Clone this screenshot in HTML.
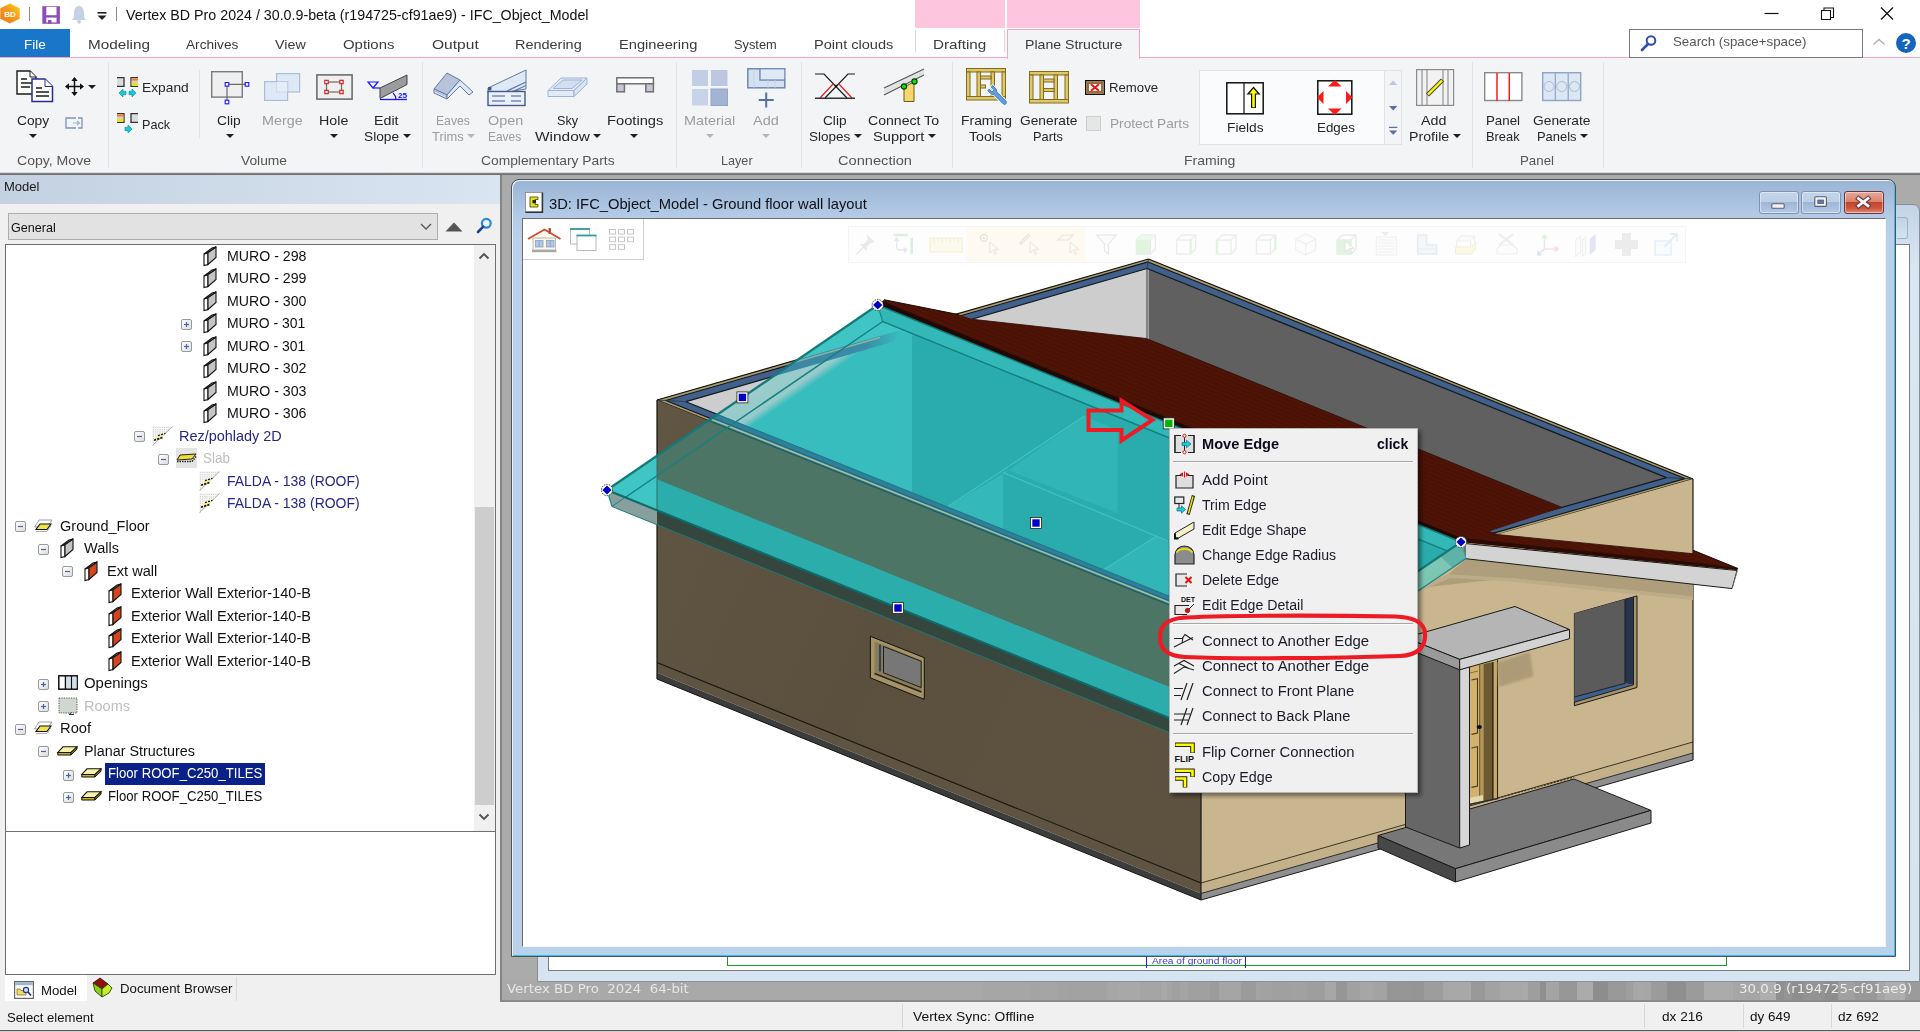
<!DOCTYPE html>
<html><head><meta charset="utf-8"><title>Vertex BD Pro 2024</title><style>
html,body{margin:0;padding:0;}
body{width:1920px;height:1032px;overflow:hidden;position:relative;background:#f0f0f0;font-family:"Liberation Sans",sans-serif;}
.b{position:absolute;}
.t{position:absolute;white-space:nowrap;line-height:1;transform-origin:0 50%;}
svg{overflow:visible;}
</style></head><body>
<!-- sec_top -->
<div class="b" style="left:0px;top:0px;width:1920px;height:58px;background:#fff;"></div>
<svg class="b" style="left:0px;top:3px;" width="22" height="22" viewBox="0 0 22 22"><defs><linearGradient id="hx" x1="1" y1="0" x2="0" y2="1"><stop offset="0" stop-color="#ffd21a"/><stop offset="0.45" stop-color="#f79a1e"/><stop offset="1" stop-color="#ee7410"/></linearGradient></defs><polygon points="10,0.5 19.7,5.2 19.7,15.8 10,20.6 0.3,15.8 0.3,5.2" fill="url(#hx)"/><text x="10" y="13.8" font-size="8" font-weight="bold" fill="#fff" text-anchor="middle" font-family="Liberation Sans, sans-serif">BD</text></svg>
<div class="b" style="left:29px;top:7px;width:1px;height:14px;background:#8a8a8a;"></div>
<svg class="b" style="left:42px;top:6px;" width="18" height="18" viewBox="0 0 18 18"><path d="M0.3,0.2h17.6v17.6h-17.6z" fill="#8e4fb5"/><rect x="4.3" y="0.9" width="10.2" height="8.3" fill="#fff"/><rect x="4.3" y="11.6" width="10.2" height="4.8" fill="#fff"/><rect x="6" y="14" width="3.5" height="3.8" fill="#8e4fb5"/></svg>
<svg class="b" style="left:71px;top:5px;" width="16" height="19" viewBox="0 0 16 19"><path d="M8,1 C4,1 3,5 3,9 L3,12 L1,15 L15,15 L13,12 L13,9 C13,5 12,1 8,1z" fill="#c3d1e5"/><circle cx="8" cy="16.7" r="2" fill="#c3d1e5"/></svg>
<svg class="b" style="left:97px;top:12px;" width="10" height="9" viewBox="0 0 10 9"><rect x="0.5" y="0" width="9" height="1.6" fill="#222"/><polygon points="0.5,3.5 9.5,3.5 5,8" fill="#222"/></svg>
<div class="b" style="left:116px;top:7px;width:1px;height:14px;background:#8a8a8a;"></div>
<span class="t" style="left:126.0px;top:7.1px;font-size:15px;color:#111;transform:scaleX(0.9498);">Vertex BD Pro 2024 / 30.0.9-beta (r194725-cf91ae9) - IFC_Object_Model</span>
<svg class="b" style="left:1764px;top:6px;" width="140" height="16" viewBox="0 0 140 16"><path d="M0.5,7.5h14" stroke="#111" stroke-width="1.2"/><path d="M57.5,4.5h9v9h-9z M60,4.5v-2.5h9.5v9.5h-3" fill="none" stroke="#111" stroke-width="1.1"/><path d="M117,1.5l12,12M129,1.5l-12,12" stroke="#111" stroke-width="1.3"/></svg>
<div class="b" style="left:915px;top:0px;width:90px;height:28px;background:#fdc5de;"></div>
<div class="b" style="left:1007px;top:0px;width:133px;height:28px;background:#fdc5de;"></div>
<div class="b" style="left:0px;top:29px;width:70px;height:28px;background:#1976c8;"></div>
<span class="t" style="left:24.0px;top:37.7px;font-size:13px;color:#fff;transform:scaleX(1.0359);">File</span>
<span class="t" style="left:87.7px;top:37.7px;font-size:13px;color:#3a3a3a;transform:scaleX(1.1752);">Modeling</span>
<span class="t" style="left:186.0px;top:37.7px;font-size:13px;color:#3a3a3a;transform:scaleX(1.0492);">Archives</span>
<span class="t" style="left:275.3px;top:37.7px;font-size:13px;color:#3a3a3a;transform:scaleX(1.0987);">View</span>
<span class="t" style="left:343.3px;top:37.7px;font-size:13px;color:#3a3a3a;transform:scaleX(1.1473);">Options</span>
<span class="t" style="left:432.0px;top:37.7px;font-size:13px;color:#3a3a3a;transform:scaleX(1.1966);">Output</span>
<span class="t" style="left:515.3px;top:37.7px;font-size:13px;color:#3a3a3a;transform:scaleX(1.1119);">Rendering</span>
<span class="t" style="left:619.0px;top:37.7px;font-size:13px;color:#3a3a3a;transform:scaleX(1.1285);">Engineering</span>
<span class="t" style="left:734.3px;top:37.7px;font-size:13px;color:#3a3a3a;transform:scaleX(0.9852);">System</span>
<span class="t" style="left:814.0px;top:37.7px;font-size:13px;color:#3a3a3a;transform:scaleX(1.1197);">Point clouds</span>
<span class="t" style="left:932.7px;top:37.7px;font-size:13px;color:#3a3a3a;transform:scaleX(1.1709);">Drafting</span>
<span class="t" style="left:1025.0px;top:37.7px;font-size:13px;color:#3a3a3a;transform:scaleX(1.0859);">Plane Structure</span>
<div class="b" style="left:915px;top:30px;width:1px;height:22px;background:#d8d8d8;"></div>
<div class="b" style="left:1004px;top:30px;width:1px;height:22px;background:#d8d8d8;"></div>
<div class="b" style="left:0px;top:57px;width:1920px;height:1px;background:#f5a3c7;"></div>
<div class="b" style="left:0px;top:58px;width:1920px;height:114px;background:#f3f4f6;"></div>
<div class="b" style="left:1007px;top:29px;width:133px;height:30px;background:#f3f4f6;border:1px solid #f5a3c7;border-bottom:none;box-sizing:border-box;"></div>
<span class="t" style="left:1025.0px;top:37.7px;font-size:13px;color:#3a3a3a;transform:scaleX(1.0859);">Plane Structure</span>
<div class="b" style="left:1629px;top:29px;width:234px;height:29px;background:#fff;border:1px solid #7a7a7a;box-sizing:border-box;"></div>
<svg class="b" style="left:1640px;top:34px;" width="18" height="18" viewBox="0 0 18 18"><circle cx="11" cy="6.5" r="4.3" fill="none" stroke="#2b4fb0" stroke-width="2"/><path d="M8,10 L2,16" stroke="#2b4fb0" stroke-width="2.6" stroke-linecap="round"/></svg>
<span class="t" style="left:1673.3px;top:34.9px;font-size:13px;color:#555;transform:scaleX(1.0228);">Search (space+space)</span>
<svg class="b" style="left:1872px;top:38px;" width="14" height="8" viewBox="0 0 14 8"><path d="M1.5,6.5 L7,1.5 L12.5,6.5" fill="none" stroke="#b0b0b0" stroke-width="1.3"/></svg>
<svg class="b" style="left:1895px;top:32px;" width="22" height="22" viewBox="0 0 22 22"><circle cx="11" cy="11" r="10" fill="#1565c0"/><text x="11" y="16.5" font-size="15" font-weight="bold" fill="#fff" text-anchor="middle" font-family="Liberation Sans, sans-serif">?</text></svg>
<!-- sec_ribbon -->
<div class="b" style="left:108px;top:62px;width:1px;height:106px;background:#e1e3e8;"></div>
<div class="b" style="left:421.5px;top:62px;width:1px;height:106px;background:#e1e3e8;"></div>
<div class="b" style="left:675.5px;top:62px;width:1px;height:106px;background:#e1e3e8;"></div>
<div class="b" style="left:800.5px;top:62px;width:1px;height:106px;background:#e1e3e8;"></div>
<div class="b" style="left:951.5px;top:62px;width:1px;height:106px;background:#e1e3e8;"></div>
<div class="b" style="left:1471.5px;top:62px;width:1px;height:106px;background:#e1e3e8;"></div>
<div class="b" style="left:1602.5px;top:62px;width:1px;height:106px;background:#e1e3e8;"></div>
<div class="b" style="left:199px;top:70px;width:1px;height:68px;background:#e1e3e8;"></div>
<span class="t" style="left:16.7px;top:154.4px;font-size:13px;color:#555;transform:scaleX(1.0819);">Copy, Move</span>
<span class="t" style="left:240.7px;top:154.4px;font-size:13px;color:#555;transform:scaleX(1.0609);">Volume</span>
<span class="t" style="left:480.7px;top:154.4px;font-size:13px;color:#555;transform:scaleX(1.0628);">Complementary Parts</span>
<span class="t" style="left:720.7px;top:154.4px;font-size:13px;color:#555;transform:scaleX(0.9717);">Layer</span>
<span class="t" style="left:838.3px;top:154.4px;font-size:13px;color:#555;transform:scaleX(1.1252);">Connection</span>
<span class="t" style="left:1184.3px;top:154.4px;font-size:13px;color:#555;transform:scaleX(1.0781);">Framing</span>
<span class="t" style="left:1519.6px;top:154.4px;font-size:13px;color:#555;transform:scaleX(1.0226);">Panel</span>
<svg class="b" style="left:16px;top:70px;" width="38" height="33" viewBox="0 0 38 33"><path d="M1,1 h13 l6,6 v17 h-19z" fill="#fff" stroke="#1a1a1a" stroke-width="1.4"/><path d="M14,1 v6 h6" fill="#fff" stroke="#1a1a1a" stroke-width="1"/><path d="M5,9h6M5,13h11M5,17h9" stroke="#1a1a1a" stroke-width="1.3"/><path d="M16,9 h13 l7.5,7.5 v15 h-20.5z" fill="#fff" stroke="#2a2a96" stroke-width="1.5"/><path d="M29,9 v7.5 h7.5" fill="#fff" stroke="#2a2a96" stroke-width="1"/><path d="M20,18h6M20,22h13M20,26h13" stroke="#1a1a1a" stroke-width="1.3"/></svg>
<svg class="b" style="left:65px;top:77px;" width="19" height="19" viewBox="0 0 19 19"><path d="M9.5,1v17M1,9.5h17" stroke="#111" stroke-width="1.5"/><polygon points="9.5,0 6.3,4 12.7,4" fill="#111"/><polygon points="9.5,19 6.3,15 12.7,15" fill="#111"/><polygon points="0,9.5 4,6.3 4,12.7" fill="#111"/><polygon points="19,9.5 15,6.3 15,12.7" fill="#111"/></svg>
<svg class="b" style="left:87.7px;top:84.5px;" width="8" height="4" viewBox="0 0 8 4"><polygon points="0,0 8,0 4,4" fill="#1e1e1e"/></svg>
<span class="t" style="left:16.6px;top:113.6px;font-size:13px;color:#262626;transform:scaleX(1.0577);">Copy</span>
<svg class="b" style="left:29px;top:133.5px;" width="8" height="4" viewBox="0 0 8 4"><polygon points="0,0 8,0 4,4" fill="#1e1e1e"/></svg>
<svg class="b" style="left:65px;top:117px;" width="18" height="12" viewBox="0 0 18 12"><path d="M11,1 H1 V11 H11 M13,1 h4 v10 h-4" fill="none" stroke="#7d94b8" stroke-width="1.3"/><path d="M8,6 h6 M12,4 l2.5,2 l-2.5,2" fill="none" stroke="#9fb2d0" stroke-width="1.2"/></svg>
<svg class="b" style="left:117px;top:77px;" width="21" height="21" viewBox="0 0 21 21"><path d="M0,0.7h7v8.6h-7" fill="#dcdcdc" stroke="#333" stroke-width="1.3"/><path d="M21,0.7h-7v8.6h7" fill="#fff" stroke="#333" stroke-width="1.3"/><rect x="14.6" y="1.4" width="6.4" height="2.4" fill="#f08030"/><rect x="14.6" y="6" width="6.4" height="2.6" fill="#f5e400"/><rect x="14.6" y="3.8" width="6.4" height="2.2" fill="#cfcfcf"/><polygon points="2,16 6,12 6,14.3 9,14.3 9,17.7 6,17.7 6,20" fill="#18c8d8" stroke="#0a8aa0" stroke-width="0.6"/><polygon points="19,16 15,12 15,14.3 12,14.3 12,17.7 15,17.7 15,20" fill="#18c8d8" stroke="#0a8aa0" stroke-width="0.6"/></svg>
<span class="t" style="left:141.7px;top:81.3px;font-size:13px;color:#262626;transform:scaleX(1.0592);">Expand</span>
<svg class="b" style="left:117px;top:113px;" width="21" height="21" viewBox="0 0 21 21"><path d="M0,0.7h7v8.6h-7" fill="#fff" stroke="#333" stroke-width="1.3"/><rect x="0" y="1.4" width="6.4" height="2.4" fill="#f08030"/><rect x="0" y="6" width="6.4" height="2.6" fill="#f5e400"/><rect x="0" y="3.8" width="6.4" height="2.2" fill="#cfcfcf"/><path d="M21,0.7h-7v8.6h7" fill="#dcdcdc" stroke="#333" stroke-width="1.3"/><polygon points="15,16 11,12 11,14.3 8,14.3 8,17.7 11,17.7 11,20" fill="#18c8d8" stroke="#0a8aa0" stroke-width="0.6"/></svg>
<span class="t" style="left:141.7px;top:117.5px;font-size:13px;color:#262626;transform:scaleX(0.9723);">Pack</span>
<svg class="b" style="left:211px;top:71px;" width="38" height="33" viewBox="0 0 38 33"><rect x="0.7" y="0.7" width="30.6" height="25.4" fill="#efefef" stroke="#7a7a7a" stroke-width="1.4"/><path d="M16,13.4 h20 M16,13.4 v17.6" stroke="#6a6a6a" stroke-width="1.2"/><rect x="14.2" y="11.6" width="3.6" height="3.6" fill="#fff" stroke="#1414ff" stroke-width="1.1"/><rect x="34.2" y="11.6" width="3.6" height="3.6" fill="#fff" stroke="#1414ff" stroke-width="1.1"/><rect x="14.2" y="29.2" width="3.6" height="3.6" fill="#fff" stroke="#1414ff" stroke-width="1.1"/></svg>
<span class="t" style="left:216.8px;top:113.6px;font-size:13px;color:#262626;transform:scaleX(1.0583);">Clip</span>
<svg class="b" style="left:225.5px;top:133.5px;" width="8" height="4" viewBox="0 0 8 4"><polygon points="0,0 8,0 4,4" fill="#1e1e1e"/></svg>
<svg class="b" style="left:264px;top:73px;" width="36" height="28" viewBox="0 0 36 28"><rect x="12.6" y="0.6" width="23" height="18.4" fill="#dfe8f5" stroke="#a9bcdb" stroke-width="1.2"/><rect x="0.6" y="8.6" width="23" height="18.8" fill="#dfe8f5" stroke="#a9bcdb" stroke-width="1.2"/><rect x="12.6" y="8.6" width="11" height="10.4" fill="#e4ecf7" stroke="#b9c8e0" stroke-width="0.9" stroke-dasharray="1.2 1.2"/></svg>
<span class="t" style="left:261.7px;top:113.6px;font-size:13px;color:#9c9c9c;transform:scaleX(1.1045);">Merge</span>
<svg class="b" style="left:316px;top:74px;" width="37" height="26" viewBox="0 0 37 26"><rect x="0.9" y="0.9" width="35.2" height="24.2" fill="#efefef" stroke="#6e6e6e" stroke-width="1.6"/><rect x="10.5" y="8" width="15" height="10" fill="none" stroke="#6a6a6a" stroke-width="1.2"/><g fill="#fff" stroke="#e01010" stroke-width="1.1"><rect x="8.8" y="6.3" width="3.4" height="3.4"/><rect x="23.8" y="6.3" width="3.4" height="3.4"/><rect x="8.8" y="16.3" width="3.4" height="3.4"/><rect x="23.8" y="16.3" width="3.4" height="3.4"/></g></svg>
<span class="t" style="left:319.2px;top:113.6px;font-size:13px;color:#262626;transform:scaleX(1.0959);">Hole</span>
<svg class="b" style="left:330.3px;top:133.5px;" width="8" height="4" viewBox="0 0 8 4"><polygon points="0,0 8,0 4,4" fill="#1e1e1e"/></svg>
<svg class="b" style="left:367px;top:74px;" width="41" height="27" viewBox="0 0 41 27"><polygon points="13,14 40,1 40,10.5 13,24.5" fill="#9c9c9c" stroke="#444" stroke-width="1"/><path d="M1,8 h10 l-5,6z" fill="none" stroke="#1414ff" stroke-width="1.2"/><path d="M6,14 h7" stroke="#1414ff" stroke-width="1.2"/><path d="M13,25.5 h27" stroke="#1414ff" stroke-width="1.3"/><path d="M26,19 q3,3 3,6" fill="none" stroke="#1414ff" stroke-width="1.1"/><text x="31" y="24" font-size="8" font-weight="bold" fill="#1414ff" font-family="Liberation Sans, sans-serif">25</text></svg>
<span class="t" style="left:374.3px;top:113.6px;font-size:13px;color:#262626;transform:scaleX(1.0937);">Edit</span>
<span class="t" style="left:364.3px;top:129.6px;font-size:13px;color:#262626;transform:scaleX(1.0557);">Slope</span>
<svg class="b" style="left:403px;top:133.5px;" width="8" height="4" viewBox="0 0 8 4"><polygon points="0,0 8,0 4,4" fill="#1e1e1e"/></svg>
<svg class="b" style="left:433px;top:72px;" width="41" height="27" viewBox="0 0 41 27"><polygon points="1,17 14,1 27,8 14,23" fill="#b7c3d8" stroke="#5f78a8" stroke-width="1"/><polygon points="1,17 14,23 14,27 1,21" fill="#dfe7f3" stroke="#5f78a8" stroke-width="1"/><polygon points="14,23 27,8 40,20 36,23 27,14 14,27" fill="#dfe7f3" stroke="#5f78a8" stroke-width="1"/><path d="M2,19 l12,6" stroke="#8fa3c7" stroke-width="0.8"/></svg>
<span class="t" style="left:435.6px;top:113.6px;font-size:13px;color:#9c9c9c;transform:scaleX(0.9355);">Eaves</span>
<span class="t" style="left:431.5px;top:129.6px;font-size:13px;color:#9c9c9c;transform:scaleX(0.9936);">Trims</span>
<svg class="b" style="left:466.8px;top:133.5px;" width="8" height="4" viewBox="0 0 8 4"><polygon points="0,0 8,0 4,4" fill="#b5b5b5"/></svg>
<svg class="b" style="left:487px;top:69px;" width="40" height="38" viewBox="0 0 40 38"><polygon points="1,19 39,1 39,20 20,23 1,23" fill="#dfe8f5" stroke="#5f78a8" stroke-width="1"/><path d="M20,22 l19,-9 M27,22 l12,-5.5" stroke="#5f78a8" stroke-width="1.2"/><rect x="1" y="22.5" width="37" height="14" fill="#eaf0f9" stroke="#41598f" stroke-width="1.4"/><path d="M5,27h13M5,32h13M24,27h10M24,32h10" stroke="#41598f" stroke-width="1.2"/><rect x="1" y="18" width="3.4" height="3.4" fill="#41598f"/></svg>
<span class="t" style="left:488.4px;top:113.6px;font-size:13px;color:#9c9c9c;transform:scaleX(1.1069);">Open</span>
<span class="t" style="left:488.4px;top:129.6px;font-size:13px;color:#9c9c9c;transform:scaleX(0.9189);">Eaves</span>
<svg class="b" style="left:547px;top:77px;" width="41" height="21" viewBox="0 0 41 21"><polygon points="1,13.5 14,1 40,1 27,13.5" fill="#e3eaf6" stroke="#a0b3d5" stroke-width="1"/><polygon points="6,11.5 16,3 35,3 25,11.5" fill="#d3dff0" stroke="#a0b3d5" stroke-width="1"/><polygon points="1,13.5 27,13.5 27,19.5 1,19.5" fill="#e3eaf6" stroke="#a0b3d5" stroke-width="1"/><polygon points="27,13.5 40,1 40,7 27,19.5" fill="#d9e3f2" stroke="#a0b3d5" stroke-width="1"/></svg>
<span class="t" style="left:556.8px;top:113.6px;font-size:13px;color:#262626;transform:scaleX(0.9690);">Sky</span>
<span class="t" style="left:535.1px;top:129.6px;font-size:13px;color:#262626;transform:scaleX(1.1874);">Window</span>
<svg class="b" style="left:592.7px;top:133.5px;" width="8" height="4" viewBox="0 0 8 4"><polygon points="0,0 8,0 4,4" fill="#1e1e1e"/></svg>
<svg class="b" style="left:616px;top:77px;" width="39" height="16" viewBox="0 0 39 16"><rect x="0.8" y="0.8" width="36.6" height="6" fill="#fff" stroke="#707070" stroke-width="1.5"/><rect x="0.8" y="6.8" width="7.6" height="8" fill="#c9c5d6" stroke="#707070" stroke-width="1.5"/><rect x="29.8" y="6.8" width="7.6" height="8" fill="#c9c5d6" stroke="#707070" stroke-width="1.5"/></svg>
<span class="t" style="left:606.6px;top:113.6px;font-size:13px;color:#262626;transform:scaleX(1.1311);">Footings</span>
<svg class="b" style="left:630.2px;top:133.5px;" width="8" height="4" viewBox="0 0 8 4"><polygon points="0,0 8,0 4,4" fill="#1e1e1e"/></svg>
<svg class="b" style="left:692px;top:70px;" width="36" height="36" viewBox="0 0 36 36"><rect x="0" y="0" width="16" height="16" fill="#c2cee4"/><rect x="19" y="0" width="16.5" height="16" fill="#bbc8e0"/><rect x="0" y="19" width="16" height="16.5" fill="#c8d3e7"/><rect x="19" y="19" width="16.5" height="16.5" fill="#a3b4d3" stroke="#93a6c9" stroke-width="1"/></svg>
<span class="t" style="left:684.4px;top:113.6px;font-size:13px;color:#9c9c9c;transform:scaleX(1.1095);">Material</span>
<svg class="b" style="left:705.6px;top:133.5px;" width="8" height="4" viewBox="0 0 8 4"><polygon points="0,0 8,0 4,4" fill="#b5b5b5"/></svg>
<svg class="b" style="left:747px;top:68px;" width="39" height="40" viewBox="0 0 39 40"><rect x="0.8" y="0.8" width="37" height="19" fill="#d5e0f0" stroke="#6d87b5" stroke-width="1.5"/><path d="M13,1 v11 h25" fill="none" stroke="#6d87b5" stroke-width="1.5"/><rect x="13.8" y="1.6" width="23.4" height="9.6" fill="#dfe8f5"/><path d="M7,1v19M21,12v8M28,12v8" stroke="#c2d0e6" stroke-width="0.8"/><path d="M19.2,24.5v15M11.7,32h15" stroke="#5470a6" stroke-width="2"/></svg>
<span class="t" style="left:752.8px;top:113.6px;font-size:13px;color:#9c9c9c;transform:scaleX(1.1111);">Add</span>
<svg class="b" style="left:761.5px;top:133.5px;" width="8" height="4" viewBox="0 0 8 4"><polygon points="0,0 8,0 4,4" fill="#b5b5b5"/></svg>
<svg class="b" style="left:815px;top:73px;" width="41" height="27" viewBox="0 0 41 27"><path d="M0,1h9L32,25 M40,1h-7L10,25" fill="none" stroke="#1a1a1a" stroke-width="1.2"/><path d="M18.5,10.5 L5,25 M23.5,10.5 L37,25" stroke="#e82020" stroke-width="1.2"/><path d="M0,25.3h40" stroke="#333" stroke-width="1.5"/><circle cx="21" cy="13" r="1.3" fill="#111"/></svg>
<span class="t" style="left:822.9px;top:113.6px;font-size:13px;color:#262626;transform:scaleX(1.0494);">Clip</span>
<span class="t" style="left:809.3px;top:129.6px;font-size:13px;color:#262626;transform:scaleX(1.0365);">Slopes</span>
<svg class="b" style="left:854px;top:133.5px;" width="8" height="4" viewBox="0 0 8 4"><polygon points="0,0 8,0 4,4" fill="#1e1e1e"/></svg>
<svg class="b" style="left:883px;top:68px;" width="42" height="35" viewBox="0 0 42 35"><polygon points="1,20 41,1 41,7 1,27" fill="#e2e2e2"/><path d="M1,20L41,1M1,27L41,7" stroke="#555" stroke-width="1.1"/><polygon points="21,19 31,14 31,33.5 21,33.5" fill="#f5d76e" stroke="#6e5a1a" stroke-width="1"/><circle cx="21" cy="18.5" r="2.6" fill="#10e010" stroke="#0a3a0a" stroke-width="1.1"/><circle cx="31.5" cy="13.5" r="2.6" fill="#10e010" stroke="#0a3a0a" stroke-width="1.1"/></svg>
<span class="t" style="left:868.2px;top:113.6px;font-size:13px;color:#262626;transform:scaleX(1.0835);">Connect To</span>
<span class="t" style="left:873.2px;top:129.6px;font-size:13px;color:#262626;transform:scaleX(1.1267);">Support</span>
<svg class="b" style="left:927.6px;top:133.5px;" width="8" height="4" viewBox="0 0 8 4"><polygon points="0,0 8,0 4,4" fill="#1e1e1e"/></svg>
<svg class="b" style="left:966px;top:68px;" width="42" height="40" viewBox="0 0 42 40"><g fill="#dfc866" stroke="#7f6b22" stroke-width="1"><rect x="0.5" y="0.5" width="39" height="3.5"/><rect x="0.5" y="28.5" width="39" height="3.5"/><rect x="0.5" y="4" width="3.5" height="24.5"/><rect x="36" y="4" width="3.5" height="24.5"/><rect x="11" y="4" width="3.5" height="24.5"/><rect x="25" y="4" width="3.5" height="24.5"/><rect x="14.5" y="8" width="10.5" height="3"/><rect x="14.5" y="17" width="5" height="3"/></g><g transform="translate(30,26.3) rotate(-45)"><path d="M-3.2,-8.5 v4.2 a3.4,3.4 0 0 0 1.6,2.9 v13.2 a1.9,1.9 0 0 0 3.8,0 v-13.2 a3.4,3.4 0 0 0 1.6,-2.9 v-4.2 h-2 v4 h-3 v-4z" fill="#5f9fe2" stroke="#f3f4f6" stroke-width="2.6" stroke-linejoin="round"/><path d="M-3.2,-8.5 v4.2 a3.4,3.4 0 0 0 1.6,2.9 v13.2 a1.9,1.9 0 0 0 3.8,0 v-13.2 a3.4,3.4 0 0 0 1.6,-2.9 v-4.2 h-2 v4 h-3 v-4z" fill="#5f9fe2" stroke="#3a72b6" stroke-width="0.9" stroke-linejoin="round"/></g></svg>
<span class="t" style="left:960.6px;top:113.6px;font-size:13px;color:#262626;transform:scaleX(1.0697);">Framing</span>
<span class="t" style="left:968.9px;top:129.6px;font-size:13px;color:#262626;transform:scaleX(1.0841);">Tools</span>
<svg class="b" style="left:1029px;top:71px;" width="41" height="34" viewBox="0 0 41 34"><g fill="#dfc866" stroke="#7f6b22" stroke-width="1"><rect x="0.5" y="0.5" width="39" height="3.5"/><rect x="0.5" y="28.5" width="39" height="3.5"/><rect x="0.5" y="4" width="3.5" height="24.5"/><rect x="36" y="4" width="3.5" height="24.5"/><rect x="11" y="4" width="3.5" height="24.5"/><rect x="25" y="4" width="3.5" height="24.5"/><rect x="14.5" y="8" width="10.5" height="3"/><rect x="14.5" y="17.5" width="10.5" height="3"/></g></svg>
<span class="t" style="left:1019.5px;top:113.6px;font-size:13px;color:#262626;transform:scaleX(1.0590);">Generate</span>
<span class="t" style="left:1033.4px;top:129.6px;font-size:13px;color:#262626;transform:scaleX(0.9854);">Parts</span>
<svg class="b" style="left:1085px;top:80px;" width="20" height="15" viewBox="0 0 20 15"><rect x="0.7" y="0.7" width="18.6" height="13.6" fill="#fff" stroke="#111" stroke-width="1.4"/><rect x="1.4" y="1.4" width="17.2" height="2.6" fill="#9c6a3c"/><rect x="1.4" y="11" width="17.2" height="2.6" fill="#9c6a3c"/><rect x="1.4" y="4" width="2.6" height="7" fill="#9c6a3c"/><rect x="16" y="4" width="2.6" height="7" fill="#9c6a3c"/><path d="M6,4.3l8,6.4M14,4.3l-8,6.4" stroke="#ee1111" stroke-width="2"/></svg>
<span class="t" style="left:1109.4px;top:81.2px;font-size:13px;color:#262626;transform:scaleX(1.0143);">Remove</span>
<div class="b" style="left:1085.5px;top:115.5px;width:15px;height:15px;background:#e6e6e6;border:1px solid #cdcdcd;box-sizing:border-box;"></div>
<span class="t" style="left:1110.4px;top:117.4px;font-size:13px;color:#9c9c9c;transform:scaleX(1.0514);">Protect Parts</span>
<div class="b" style="left:1199px;top:70px;width:203px;height:75px;background:#fafbfc;border:1px solid #e0e2e6;box-sizing:border-box;"></div>
<div class="b" style="left:1384px;top:71px;width:1px;height:73px;background:#e0e2e6;"></div>
<div class="b" style="left:1385px;top:71px;width:16px;height:73px;background:#f3f4f6;"></div>
<svg class="b" style="left:1226px;top:82px;" width="38" height="33" viewBox="0 0 38 33"><rect x="0.8" y="0.8" width="36.4" height="31" fill="#fff" stroke="#111" stroke-width="1.5"/><path d="M18,1v31" stroke="#111" stroke-width="1.2"/><path d="M27.5,7v19" stroke="#111" stroke-width="5"/><polygon points="27.5,4.5 20.5,12.5 34.5,12.5" fill="#111"/><path d="M27.5,8v17.3" stroke="#ffff00" stroke-width="2.6"/><polygon points="27.5,6.5 23.3,11.5 31.7,11.5" fill="#ffff00"/></svg>
<span class="t" style="left:1226.7px;top:121.2px;font-size:13px;color:#262626;transform:scaleX(1.0554);">Fields</span>
<svg class="b" style="left:1317px;top:80px;" width="36" height="35" viewBox="0 0 36 35"><rect x="0.8" y="0.8" width="34" height="33.4" fill="#fff" stroke="#111" stroke-width="1.5"/><g fill="#ff1a1a"><polygon points="17.8,0 11,6.5 24.6,6.5"/><polygon points="17.8,35 11,28.5 24.6,28.5"/><polygon points="0,17.5 6.5,11 6.5,24"/><polygon points="35.6,17.5 29,11 29,24"/></g></svg>
<span class="t" style="left:1316.6px;top:121.2px;font-size:13px;color:#262626;transform:scaleX(1.0255);">Edges</span>
<svg class="b" style="left:1389px;top:80px;" width="9" height="56" viewBox="0 0 9 56"><polygon points="0,5 8.4,5 4.2,0.6" fill="#bcc7da"/><polygon points="0,26 8.4,26 4.2,30.4" fill="#5a72a0"/><path d="M0,47.4h8.4" stroke="#5a72a0" stroke-width="1.3"/><polygon points="0,50.4 8.4,50.4 4.2,54.8" fill="#5a72a0"/></svg>
<svg class="b" style="left:1416px;top:69px;" width="39" height="37" viewBox="0 0 39 37"><rect x="0.6" y="0.6" width="37" height="35.8" fill="#f2f2f2" stroke="#8a8a8a" stroke-width="1.2"/><path d="M6,1v35M11,1v35M27,1v35M32,1v35" stroke="#8a8a8a" stroke-width="1.1"/><path d="M11.5,26 L26.5,11" stroke="#444" stroke-width="4.4"/><path d="M12,25.5 L26,11.5" stroke="#ffff00" stroke-width="2.4"/></svg>
<span class="t" style="left:1421.4px;top:113.6px;font-size:13px;color:#262626;transform:scaleX(1.0981);">Add</span>
<span class="t" style="left:1409.3px;top:129.6px;font-size:13px;color:#262626;transform:scaleX(1.0910);">Profile</span>
<svg class="b" style="left:1453px;top:133.5px;" width="8" height="4" viewBox="0 0 8 4"><polygon points="0,0 8,0 4,4" fill="#1e1e1e"/></svg>
<svg class="b" style="left:1484px;top:72px;" width="39" height="30" viewBox="0 0 39 30"><rect x="0.7" y="0.7" width="37.2" height="27.8" fill="#fff" stroke="#8a8a8a" stroke-width="1.4"/><path d="M13,1v28M25.3,1v28" stroke="#ff1a1a" stroke-width="1.5"/></svg>
<span class="t" style="left:1485.6px;top:113.6px;font-size:13px;color:#262626;transform:scaleX(1.0226);">Panel</span>
<span class="t" style="left:1486.0px;top:129.6px;font-size:13px;color:#262626;transform:scaleX(0.9894);">Break</span>
<svg class="b" style="left:1542px;top:72px;" width="40" height="30" viewBox="0 0 40 30"><rect x="0.7" y="0.7" width="38" height="27.8" fill="#dde6f3" stroke="#90a4c8" stroke-width="1.4"/><path d="M13.3,1v28M26.2,1v28" stroke="#90a4c8" stroke-width="1.2"/><circle cx="7" cy="14.5" r="5" fill="none" stroke="#a9badb" stroke-width="1"/><circle cx="19.7" cy="14.5" r="5" fill="none" stroke="#a9badb" stroke-width="1"/><circle cx="32.5" cy="14.5" r="5" fill="none" stroke="#a9badb" stroke-width="1"/></svg>
<span class="t" style="left:1533.2px;top:113.6px;font-size:13px;color:#262626;transform:scaleX(1.0608);">Generate</span>
<span class="t" style="left:1536.9px;top:129.6px;font-size:13px;color:#262626;transform:scaleX(0.9937);">Panels</span>
<svg class="b" style="left:1580.2px;top:133.5px;" width="8" height="4" viewBox="0 0 8 4"><polygon points="0,0 8,0 4,4" fill="#1e1e1e"/></svg>
<div class="b" style="left:0px;top:172px;width:1920px;height:1px;background:#d9d9d9;"></div>
<div class="b" style="left:0px;top:173px;width:1920px;height:2px;background:linear-gradient(#8c8c8c,#666);"></div>
<!-- sec_left -->
<div class="b" style="left:0px;top:175px;width:500px;height:827px;background:#f0f0f0;"></div>
<div class="b" style="left:0px;top:175px;width:500px;height:29px;background:linear-gradient(90deg,#c4d1e1,#d9e5f1);"></div>
<span class="t" style="left:3.5px;top:180.0px;font-size:13px;color:#1a1a1a;transform:scaleX(1.0026);">Model</span>
<div class="b" style="left:8px;top:213px;width:430px;height:27px;background:#e2e2e2;border:1px solid #adadad;box-sizing:border-box;"></div>
<span class="t" style="left:11.0px;top:221.0px;font-size:13px;color:#111;transform:scaleX(0.9687);">General</span>
<svg class="b" style="left:420px;top:223px;" width="12" height="8" viewBox="0 0 12 8"><path d="M1,1 L6,6 L11,1" fill="none" stroke="#555" stroke-width="1.3"/></svg>
<svg class="b" style="left:445px;top:222px;" width="18" height="10" viewBox="0 0 18 10"><polygon points="0.5,9.5 17.5,9.5 9,0.5" fill="#555"/></svg>
<svg class="b" style="left:476px;top:217px;" width="17" height="17" viewBox="0 0 17 17"><circle cx="10.3" cy="6.3" r="4.4" fill="#eef4fc" stroke="#2a84d8" stroke-width="2.2"/><path d="M7.2,9.7 L2,15" stroke="#1f3f90" stroke-width="2.6" stroke-linecap="round"/></svg>
<div class="b" style="left:5px;top:244px;width:491px;height:588px;background:#fff;border:1px solid #6f6f6f;box-sizing:border-box;"></div>
<div class="b" style="left:474px;top:245px;width:21px;height:586px;background:#f0f0f0;"></div>
<div class="b" style="left:475px;top:507px;width:19px;height:298px;background:#cdcdcd;"></div>
<svg class="b" style="left:478px;top:252px;" width="12" height="8" viewBox="0 0 12 8"><path d="M1.5,6.5 L6,2 L10.5,6.5" fill="none" stroke="#505050" stroke-width="1.8"/></svg>
<svg class="b" style="left:478px;top:813px;" width="12" height="8" viewBox="0 0 12 8"><path d="M1.5,1.5 L6,6 L10.5,1.5" fill="none" stroke="#505050" stroke-width="1.8"/></svg>
<svg class="b" style="left:203px;top:245.5px;" width="15" height="20" viewBox="0 0 15 20"><polygon points="1,8 5,6.5 5,18.5 1,19.5" fill="#fff" stroke="#111" stroke-width="1.1"/><polygon points="5,6.5 13,1 13,11.5 5,18.5" fill="#c4c4c4" stroke="#111" stroke-width="1.1"/><polygon points="1,8 9,2 13,1 5,6.5" fill="#fff" stroke="#111" stroke-width="1.1"/></svg>
<span class="t" style="left:226.7px;top:248.9px;font-size:14px;color:#111;transform:scaleX(1.0118);">MURO - 298</span>
<svg class="b" style="left:203px;top:268.0px;" width="15" height="20" viewBox="0 0 15 20"><polygon points="1,8 5,6.5 5,18.5 1,19.5" fill="#fff" stroke="#111" stroke-width="1.1"/><polygon points="5,6.5 13,1 13,11.5 5,18.5" fill="#c4c4c4" stroke="#111" stroke-width="1.1"/><polygon points="1,8 9,2 13,1 5,6.5" fill="#fff" stroke="#111" stroke-width="1.1"/></svg>
<span class="t" style="left:226.7px;top:271.4px;font-size:14px;color:#111;transform:scaleX(1.0118);">MURO - 299</span>
<svg class="b" style="left:203px;top:290.5px;" width="15" height="20" viewBox="0 0 15 20"><polygon points="1,8 5,6.5 5,18.5 1,19.5" fill="#fff" stroke="#111" stroke-width="1.1"/><polygon points="5,6.5 13,1 13,11.5 5,18.5" fill="#c4c4c4" stroke="#111" stroke-width="1.1"/><polygon points="1,8 9,2 13,1 5,6.5" fill="#fff" stroke="#111" stroke-width="1.1"/></svg>
<span class="t" style="left:226.7px;top:293.9px;font-size:14px;color:#111;transform:scaleX(1.0118);">MURO - 300</span>
<svg class="b" style="left:203px;top:313.0px;" width="15" height="20" viewBox="0 0 15 20"><polygon points="1,8 5,6.5 5,18.5 1,19.5" fill="#fff" stroke="#111" stroke-width="1.1"/><polygon points="5,6.5 13,1 13,11.5 5,18.5" fill="#c4c4c4" stroke="#111" stroke-width="1.1"/><polygon points="1,8 9,2 13,1 5,6.5" fill="#fff" stroke="#111" stroke-width="1.1"/></svg>
<span class="t" style="left:226.7px;top:316.4px;font-size:14px;color:#111;transform:scaleX(0.9965);">MURO - 301</span>
<svg class="b" style="left:203px;top:335.5px;" width="15" height="20" viewBox="0 0 15 20"><polygon points="1,8 5,6.5 5,18.5 1,19.5" fill="#fff" stroke="#111" stroke-width="1.1"/><polygon points="5,6.5 13,1 13,11.5 5,18.5" fill="#c4c4c4" stroke="#111" stroke-width="1.1"/><polygon points="1,8 9,2 13,1 5,6.5" fill="#fff" stroke="#111" stroke-width="1.1"/></svg>
<span class="t" style="left:226.7px;top:338.9px;font-size:14px;color:#111;transform:scaleX(0.9965);">MURO - 301</span>
<svg class="b" style="left:203px;top:358.0px;" width="15" height="20" viewBox="0 0 15 20"><polygon points="1,8 5,6.5 5,18.5 1,19.5" fill="#fff" stroke="#111" stroke-width="1.1"/><polygon points="5,6.5 13,1 13,11.5 5,18.5" fill="#c4c4c4" stroke="#111" stroke-width="1.1"/><polygon points="1,8 9,2 13,1 5,6.5" fill="#fff" stroke="#111" stroke-width="1.1"/></svg>
<span class="t" style="left:226.7px;top:361.4px;font-size:14px;color:#111;transform:scaleX(1.0118);">MURO - 302</span>
<svg class="b" style="left:203px;top:380.5px;" width="15" height="20" viewBox="0 0 15 20"><polygon points="1,8 5,6.5 5,18.5 1,19.5" fill="#fff" stroke="#111" stroke-width="1.1"/><polygon points="5,6.5 13,1 13,11.5 5,18.5" fill="#c4c4c4" stroke="#111" stroke-width="1.1"/><polygon points="1,8 9,2 13,1 5,6.5" fill="#fff" stroke="#111" stroke-width="1.1"/></svg>
<span class="t" style="left:226.7px;top:383.9px;font-size:14px;color:#111;transform:scaleX(1.0118);">MURO - 303</span>
<svg class="b" style="left:203px;top:403.0px;" width="15" height="20" viewBox="0 0 15 20"><polygon points="1,8 5,6.5 5,18.5 1,19.5" fill="#fff" stroke="#111" stroke-width="1.1"/><polygon points="5,6.5 13,1 13,11.5 5,18.5" fill="#c4c4c4" stroke="#111" stroke-width="1.1"/><polygon points="1,8 9,2 13,1 5,6.5" fill="#fff" stroke="#111" stroke-width="1.1"/></svg>
<span class="t" style="left:226.7px;top:406.4px;font-size:14px;color:#111;transform:scaleX(1.0118);">MURO - 306</span>
<svg class="b" style="left:181.0px;top:318.5px;" width="11" height="11" viewBox="0 0 11 11"><defs><linearGradient id="bx" x1="0" y1="0" x2="1" y2="1"><stop offset="0" stop-color="#fff"/><stop offset="1" stop-color="#dcdcdc"/></linearGradient></defs><rect x="0.5" y="0.5" width="10" height="10" rx="1.5" fill="url(#bx)" stroke="#9a9a9a"/><path d="M3,5.5h5" stroke="#4b63a7" stroke-width="1.2"/><path d="M5.5,3v5" stroke="#4b63a7" stroke-width="1.2"/></svg>
<svg class="b" style="left:181.0px;top:341.0px;" width="11" height="11" viewBox="0 0 11 11"><defs><linearGradient id="bx" x1="0" y1="0" x2="1" y2="1"><stop offset="0" stop-color="#fff"/><stop offset="1" stop-color="#dcdcdc"/></linearGradient></defs><rect x="0.5" y="0.5" width="10" height="10" rx="1.5" fill="url(#bx)" stroke="#9a9a9a"/><path d="M3,5.5h5" stroke="#4b63a7" stroke-width="1.2"/><path d="M5.5,3v5" stroke="#4b63a7" stroke-width="1.2"/></svg>
<svg class="b" style="left:134.0px;top:431.0px;" width="11" height="11" viewBox="0 0 11 11"><defs><linearGradient id="bx" x1="0" y1="0" x2="1" y2="1"><stop offset="0" stop-color="#fff"/><stop offset="1" stop-color="#dcdcdc"/></linearGradient></defs><rect x="0.5" y="0.5" width="10" height="10" rx="1.5" fill="url(#bx)" stroke="#9a9a9a"/><path d="M3,5.5h5" stroke="#4b63a7" stroke-width="1.2"/></svg>
<svg class="b" style="left:152px;top:425.5px;" width="21" height="20" viewBox="0 0 21 20"><polygon points="0,0 21,0 0,20" fill="#f7f7f7"/><rect x="1.0" y="1.0" width="1" height="1" fill="#c9c9c9"/><rect x="3.2" y="1.0" width="1" height="1" fill="#c9c9c9"/><rect x="5.4" y="1.0" width="1" height="1" fill="#c9c9c9"/><rect x="7.6" y="1.0" width="1" height="1" fill="#c9c9c9"/><rect x="9.8" y="1.0" width="1" height="1" fill="#c9c9c9"/><rect x="12.0" y="1.0" width="1" height="1" fill="#c9c9c9"/><rect x="14.2" y="1.0" width="1" height="1" fill="#c9c9c9"/><rect x="16.4" y="1.0" width="1" height="1" fill="#c9c9c9"/><rect x="18.6" y="1.0" width="1" height="1" fill="#c9c9c9"/><rect x="1.0" y="3.2" width="1" height="1" fill="#c9c9c9"/><rect x="3.2" y="3.2" width="1" height="1" fill="#c9c9c9"/><rect x="5.4" y="3.2" width="1" height="1" fill="#c9c9c9"/><rect x="7.6" y="3.2" width="1" height="1" fill="#c9c9c9"/><rect x="9.8" y="3.2" width="1" height="1" fill="#c9c9c9"/><rect x="12.0" y="3.2" width="1" height="1" fill="#c9c9c9"/><rect x="14.2" y="3.2" width="1" height="1" fill="#c9c9c9"/><rect x="16.4" y="3.2" width="1" height="1" fill="#c9c9c9"/><rect x="1.0" y="5.4" width="1" height="1" fill="#c9c9c9"/><rect x="3.2" y="5.4" width="1" height="1" fill="#c9c9c9"/><rect x="5.4" y="5.4" width="1" height="1" fill="#c9c9c9"/><rect x="7.6" y="5.4" width="1" height="1" fill="#c9c9c9"/><rect x="9.8" y="5.4" width="1" height="1" fill="#c9c9c9"/><rect x="12.0" y="5.4" width="1" height="1" fill="#c9c9c9"/><rect x="14.2" y="5.4" width="1" height="1" fill="#c9c9c9"/><rect x="1.0" y="7.6" width="1" height="1" fill="#c9c9c9"/><rect x="3.2" y="7.6" width="1" height="1" fill="#c9c9c9"/><rect x="5.4" y="7.6" width="1" height="1" fill="#c9c9c9"/><rect x="7.6" y="7.6" width="1" height="1" fill="#c9c9c9"/><rect x="9.8" y="7.6" width="1" height="1" fill="#c9c9c9"/><rect x="12.0" y="7.6" width="1" height="1" fill="#c9c9c9"/><rect x="1.0" y="9.8" width="1" height="1" fill="#c9c9c9"/><rect x="3.2" y="9.8" width="1" height="1" fill="#c9c9c9"/><rect x="5.4" y="9.8" width="1" height="1" fill="#c9c9c9"/><rect x="7.6" y="9.8" width="1" height="1" fill="#c9c9c9"/><rect x="9.8" y="9.8" width="1" height="1" fill="#c9c9c9"/><rect x="1.0" y="12.0" width="1" height="1" fill="#c9c9c9"/><rect x="3.2" y="12.0" width="1" height="1" fill="#c9c9c9"/><rect x="5.4" y="12.0" width="1" height="1" fill="#c9c9c9"/><rect x="7.6" y="12.0" width="1" height="1" fill="#c9c9c9"/><rect x="1.0" y="14.2" width="1" height="1" fill="#c9c9c9"/><rect x="3.2" y="14.2" width="1" height="1" fill="#c9c9c9"/><rect x="5.4" y="14.2" width="1" height="1" fill="#c9c9c9"/><rect x="1.0" y="16.4" width="1" height="1" fill="#c9c9c9"/><rect x="3.2" y="16.4" width="1" height="1" fill="#c9c9c9"/><rect x="1.0" y="18.6" width="1" height="1" fill="#c9c9c9"/><path d="M0.5,19.5 L20.5,0.5" stroke="#a8a8a8" stroke-width="0.9"/><polygon points="2.5,13.2 5.5,10 13.5,7.6 10.5,10.8" fill="#f7ee7a"/><path d="M2,14.2 l9,-2.8" stroke="#111" stroke-width="1.7" stroke-dasharray="2.2 1.1"/><path d="M6,9.6 l7.5,-2.2" stroke="#111" stroke-width="1.2" stroke-dasharray="2 1.2"/></svg>
<span class="t" style="left:179.0px;top:428.9px;font-size:14px;color:#26268a;transform:scaleX(1.0320);">Rez/pohlady 2D</span>
<svg class="b" style="left:157.5px;top:453.5px;" width="11" height="11" viewBox="0 0 11 11"><defs><linearGradient id="bx" x1="0" y1="0" x2="1" y2="1"><stop offset="0" stop-color="#fff"/><stop offset="1" stop-color="#dcdcdc"/></linearGradient></defs><rect x="0.5" y="0.5" width="10" height="10" rx="1.5" fill="url(#bx)" stroke="#9a9a9a"/><path d="M3,5.5h5" stroke="#4b63a7" stroke-width="1.2"/></svg>
<svg class="b" style="left:176px;top:448.0px;" width="21" height="20" viewBox="0 0 21 20"><rect x="0" y="0" width="21" height="20" fill="#e4e4e4"/><polygon points="4,7 20,6 16,11 1,12" fill="#f0dc30" stroke="#222" stroke-width="1"/><path d="M1,13.5h15l4,-5" fill="none" stroke="#222" stroke-width="1.6" stroke-dasharray="1.5 1"/></svg>
<span class="t" style="left:203.0px;top:451.4px;font-size:14px;color:#bdbdbd;transform:scaleX(0.9636);">Slab</span>
<svg class="b" style="left:199px;top:470.5px;" width="21" height="20" viewBox="0 0 21 20"><polygon points="0,0 21,0 0,20" fill="#f7f7f7"/><rect x="1.0" y="1.0" width="1" height="1" fill="#c9c9c9"/><rect x="3.2" y="1.0" width="1" height="1" fill="#c9c9c9"/><rect x="5.4" y="1.0" width="1" height="1" fill="#c9c9c9"/><rect x="7.6" y="1.0" width="1" height="1" fill="#c9c9c9"/><rect x="9.8" y="1.0" width="1" height="1" fill="#c9c9c9"/><rect x="12.0" y="1.0" width="1" height="1" fill="#c9c9c9"/><rect x="14.2" y="1.0" width="1" height="1" fill="#c9c9c9"/><rect x="16.4" y="1.0" width="1" height="1" fill="#c9c9c9"/><rect x="18.6" y="1.0" width="1" height="1" fill="#c9c9c9"/><rect x="1.0" y="3.2" width="1" height="1" fill="#c9c9c9"/><rect x="3.2" y="3.2" width="1" height="1" fill="#c9c9c9"/><rect x="5.4" y="3.2" width="1" height="1" fill="#c9c9c9"/><rect x="7.6" y="3.2" width="1" height="1" fill="#c9c9c9"/><rect x="9.8" y="3.2" width="1" height="1" fill="#c9c9c9"/><rect x="12.0" y="3.2" width="1" height="1" fill="#c9c9c9"/><rect x="14.2" y="3.2" width="1" height="1" fill="#c9c9c9"/><rect x="16.4" y="3.2" width="1" height="1" fill="#c9c9c9"/><rect x="1.0" y="5.4" width="1" height="1" fill="#c9c9c9"/><rect x="3.2" y="5.4" width="1" height="1" fill="#c9c9c9"/><rect x="5.4" y="5.4" width="1" height="1" fill="#c9c9c9"/><rect x="7.6" y="5.4" width="1" height="1" fill="#c9c9c9"/><rect x="9.8" y="5.4" width="1" height="1" fill="#c9c9c9"/><rect x="12.0" y="5.4" width="1" height="1" fill="#c9c9c9"/><rect x="14.2" y="5.4" width="1" height="1" fill="#c9c9c9"/><rect x="1.0" y="7.6" width="1" height="1" fill="#c9c9c9"/><rect x="3.2" y="7.6" width="1" height="1" fill="#c9c9c9"/><rect x="5.4" y="7.6" width="1" height="1" fill="#c9c9c9"/><rect x="7.6" y="7.6" width="1" height="1" fill="#c9c9c9"/><rect x="9.8" y="7.6" width="1" height="1" fill="#c9c9c9"/><rect x="12.0" y="7.6" width="1" height="1" fill="#c9c9c9"/><rect x="1.0" y="9.8" width="1" height="1" fill="#c9c9c9"/><rect x="3.2" y="9.8" width="1" height="1" fill="#c9c9c9"/><rect x="5.4" y="9.8" width="1" height="1" fill="#c9c9c9"/><rect x="7.6" y="9.8" width="1" height="1" fill="#c9c9c9"/><rect x="9.8" y="9.8" width="1" height="1" fill="#c9c9c9"/><rect x="1.0" y="12.0" width="1" height="1" fill="#c9c9c9"/><rect x="3.2" y="12.0" width="1" height="1" fill="#c9c9c9"/><rect x="5.4" y="12.0" width="1" height="1" fill="#c9c9c9"/><rect x="7.6" y="12.0" width="1" height="1" fill="#c9c9c9"/><rect x="1.0" y="14.2" width="1" height="1" fill="#c9c9c9"/><rect x="3.2" y="14.2" width="1" height="1" fill="#c9c9c9"/><rect x="5.4" y="14.2" width="1" height="1" fill="#c9c9c9"/><rect x="1.0" y="16.4" width="1" height="1" fill="#c9c9c9"/><rect x="3.2" y="16.4" width="1" height="1" fill="#c9c9c9"/><rect x="1.0" y="18.6" width="1" height="1" fill="#c9c9c9"/><path d="M0.5,19.5 L20.5,0.5" stroke="#a8a8a8" stroke-width="0.9"/><polygon points="2.5,13.2 5.5,10 13.5,7.6 10.5,10.8" fill="#f7ee7a"/><path d="M2,14.2 l9,-2.8" stroke="#111" stroke-width="1.7" stroke-dasharray="2.2 1.1"/><path d="M6,9.6 l7.5,-2.2" stroke="#111" stroke-width="1.2" stroke-dasharray="2 1.2"/></svg>
<span class="t" style="left:226.7px;top:473.9px;font-size:14px;color:#26268a;transform:scaleX(0.9967);">FALDA - 138 (ROOF)</span>
<svg class="b" style="left:199px;top:493.0px;" width="21" height="20" viewBox="0 0 21 20"><polygon points="0,0 21,0 0,20" fill="#f7f7f7"/><rect x="1.0" y="1.0" width="1" height="1" fill="#c9c9c9"/><rect x="3.2" y="1.0" width="1" height="1" fill="#c9c9c9"/><rect x="5.4" y="1.0" width="1" height="1" fill="#c9c9c9"/><rect x="7.6" y="1.0" width="1" height="1" fill="#c9c9c9"/><rect x="9.8" y="1.0" width="1" height="1" fill="#c9c9c9"/><rect x="12.0" y="1.0" width="1" height="1" fill="#c9c9c9"/><rect x="14.2" y="1.0" width="1" height="1" fill="#c9c9c9"/><rect x="16.4" y="1.0" width="1" height="1" fill="#c9c9c9"/><rect x="18.6" y="1.0" width="1" height="1" fill="#c9c9c9"/><rect x="1.0" y="3.2" width="1" height="1" fill="#c9c9c9"/><rect x="3.2" y="3.2" width="1" height="1" fill="#c9c9c9"/><rect x="5.4" y="3.2" width="1" height="1" fill="#c9c9c9"/><rect x="7.6" y="3.2" width="1" height="1" fill="#c9c9c9"/><rect x="9.8" y="3.2" width="1" height="1" fill="#c9c9c9"/><rect x="12.0" y="3.2" width="1" height="1" fill="#c9c9c9"/><rect x="14.2" y="3.2" width="1" height="1" fill="#c9c9c9"/><rect x="16.4" y="3.2" width="1" height="1" fill="#c9c9c9"/><rect x="1.0" y="5.4" width="1" height="1" fill="#c9c9c9"/><rect x="3.2" y="5.4" width="1" height="1" fill="#c9c9c9"/><rect x="5.4" y="5.4" width="1" height="1" fill="#c9c9c9"/><rect x="7.6" y="5.4" width="1" height="1" fill="#c9c9c9"/><rect x="9.8" y="5.4" width="1" height="1" fill="#c9c9c9"/><rect x="12.0" y="5.4" width="1" height="1" fill="#c9c9c9"/><rect x="14.2" y="5.4" width="1" height="1" fill="#c9c9c9"/><rect x="1.0" y="7.6" width="1" height="1" fill="#c9c9c9"/><rect x="3.2" y="7.6" width="1" height="1" fill="#c9c9c9"/><rect x="5.4" y="7.6" width="1" height="1" fill="#c9c9c9"/><rect x="7.6" y="7.6" width="1" height="1" fill="#c9c9c9"/><rect x="9.8" y="7.6" width="1" height="1" fill="#c9c9c9"/><rect x="12.0" y="7.6" width="1" height="1" fill="#c9c9c9"/><rect x="1.0" y="9.8" width="1" height="1" fill="#c9c9c9"/><rect x="3.2" y="9.8" width="1" height="1" fill="#c9c9c9"/><rect x="5.4" y="9.8" width="1" height="1" fill="#c9c9c9"/><rect x="7.6" y="9.8" width="1" height="1" fill="#c9c9c9"/><rect x="9.8" y="9.8" width="1" height="1" fill="#c9c9c9"/><rect x="1.0" y="12.0" width="1" height="1" fill="#c9c9c9"/><rect x="3.2" y="12.0" width="1" height="1" fill="#c9c9c9"/><rect x="5.4" y="12.0" width="1" height="1" fill="#c9c9c9"/><rect x="7.6" y="12.0" width="1" height="1" fill="#c9c9c9"/><rect x="1.0" y="14.2" width="1" height="1" fill="#c9c9c9"/><rect x="3.2" y="14.2" width="1" height="1" fill="#c9c9c9"/><rect x="5.4" y="14.2" width="1" height="1" fill="#c9c9c9"/><rect x="1.0" y="16.4" width="1" height="1" fill="#c9c9c9"/><rect x="3.2" y="16.4" width="1" height="1" fill="#c9c9c9"/><rect x="1.0" y="18.6" width="1" height="1" fill="#c9c9c9"/><path d="M0.5,19.5 L20.5,0.5" stroke="#a8a8a8" stroke-width="0.9"/><polygon points="2.5,13.2 5.5,10 13.5,7.6 10.5,10.8" fill="#f7ee7a"/><path d="M2,14.2 l9,-2.8" stroke="#111" stroke-width="1.7" stroke-dasharray="2.2 1.1"/><path d="M6,9.6 l7.5,-2.2" stroke="#111" stroke-width="1.2" stroke-dasharray="2 1.2"/></svg>
<span class="t" style="left:226.7px;top:496.4px;font-size:14px;color:#26268a;transform:scaleX(0.9967);">FALDA - 138 (ROOF)</span>
<svg class="b" style="left:14.5px;top:521.0px;" width="11" height="11" viewBox="0 0 11 11"><defs><linearGradient id="bx" x1="0" y1="0" x2="1" y2="1"><stop offset="0" stop-color="#fff"/><stop offset="1" stop-color="#dcdcdc"/></linearGradient></defs><rect x="0.5" y="0.5" width="10" height="10" rx="1.5" fill="url(#bx)" stroke="#9a9a9a"/><path d="M3,5.5h5" stroke="#4b63a7" stroke-width="1.2"/></svg>
<svg class="b" style="left:34px;top:517.5px;" width="19" height="16" viewBox="0 0 19 16"><polygon points="5,2 18,2 13,9 0.5,9" fill="none" stroke="#888" stroke-width="0.8"/><polygon points="6,6 17,6 13,11.5 2,11.5" fill="#f3e24a" stroke="#111" stroke-width="1.1"/><path d="M2,13.5h11l4,-5.5" fill="none" stroke="#999" stroke-width="0.8"/></svg>
<span class="t" style="left:60.3px;top:518.9px;font-size:14px;color:#111;transform:scaleX(1.0384);">Ground_Floor</span>
<svg class="b" style="left:38.2px;top:543.5px;" width="11" height="11" viewBox="0 0 11 11"><defs><linearGradient id="bx" x1="0" y1="0" x2="1" y2="1"><stop offset="0" stop-color="#fff"/><stop offset="1" stop-color="#dcdcdc"/></linearGradient></defs><rect x="0.5" y="0.5" width="10" height="10" rx="1.5" fill="url(#bx)" stroke="#9a9a9a"/><path d="M3,5.5h5" stroke="#4b63a7" stroke-width="1.2"/></svg>
<svg class="b" style="left:60px;top:538.0px;" width="15" height="20" viewBox="0 0 15 20"><polygon points="1,8 5,6.5 5,18.5 1,19.5" fill="#fff" stroke="#111" stroke-width="1.1"/><polygon points="5,6.5 13,1 13,11.5 5,18.5" fill="#c4c4c4" stroke="#111" stroke-width="1.1"/><polygon points="1,8 9,2 13,1 5,6.5" fill="#fff" stroke="#111" stroke-width="1.1"/></svg>
<span class="t" style="left:83.7px;top:541.4px;font-size:14px;color:#111;transform:scaleX(1.0356);">Walls</span>
<svg class="b" style="left:62.0px;top:566.0px;" width="11" height="11" viewBox="0 0 11 11"><defs><linearGradient id="bx" x1="0" y1="0" x2="1" y2="1"><stop offset="0" stop-color="#fff"/><stop offset="1" stop-color="#dcdcdc"/></linearGradient></defs><rect x="0.5" y="0.5" width="10" height="10" rx="1.5" fill="url(#bx)" stroke="#9a9a9a"/><path d="M3,5.5h5" stroke="#4b63a7" stroke-width="1.2"/></svg>
<svg class="b" style="left:84px;top:560.5px;" width="15" height="20" viewBox="0 0 15 20"><polygon points="1,8 5,6.5 5,18.5 1,19.5" fill="#fff" stroke="#111" stroke-width="1.1"/><polygon points="5,6.5 13,1 13,11.5 5,18.5" fill="#d8431a" stroke="#111" stroke-width="1.1"/><polygon points="1,8 9,2 13,1 5,6.5" fill="#fff" stroke="#111" stroke-width="1.1"/></svg>
<span class="t" style="left:107.4px;top:563.9px;font-size:14px;color:#111;transform:scaleX(1.0428);">Ext wall</span>
<svg class="b" style="left:108px;top:583.0px;" width="15" height="20" viewBox="0 0 15 20"><polygon points="1,8 5,6.5 5,18.5 1,19.5" fill="#fff" stroke="#111" stroke-width="1.1"/><polygon points="5,6.5 13,1 13,11.5 5,18.5" fill="#d8431a" stroke="#111" stroke-width="1.1"/><polygon points="1,8 9,2 13,1 5,6.5" fill="#fff" stroke="#111" stroke-width="1.1"/></svg>
<span class="t" style="left:131.0px;top:586.4px;font-size:14px;color:#111;transform:scaleX(1.0406);">Exterior Wall Exterior-140-B</span>
<svg class="b" style="left:108px;top:605.5px;" width="15" height="20" viewBox="0 0 15 20"><polygon points="1,8 5,6.5 5,18.5 1,19.5" fill="#fff" stroke="#111" stroke-width="1.1"/><polygon points="5,6.5 13,1 13,11.5 5,18.5" fill="#d8431a" stroke="#111" stroke-width="1.1"/><polygon points="1,8 9,2 13,1 5,6.5" fill="#fff" stroke="#111" stroke-width="1.1"/></svg>
<span class="t" style="left:131.0px;top:608.9px;font-size:14px;color:#111;transform:scaleX(1.0406);">Exterior Wall Exterior-140-B</span>
<svg class="b" style="left:108px;top:628.0px;" width="15" height="20" viewBox="0 0 15 20"><polygon points="1,8 5,6.5 5,18.5 1,19.5" fill="#fff" stroke="#111" stroke-width="1.1"/><polygon points="5,6.5 13,1 13,11.5 5,18.5" fill="#d8431a" stroke="#111" stroke-width="1.1"/><polygon points="1,8 9,2 13,1 5,6.5" fill="#fff" stroke="#111" stroke-width="1.1"/></svg>
<span class="t" style="left:131.0px;top:631.4px;font-size:14px;color:#111;transform:scaleX(1.0406);">Exterior Wall Exterior-140-B</span>
<svg class="b" style="left:108px;top:650.5px;" width="15" height="20" viewBox="0 0 15 20"><polygon points="1,8 5,6.5 5,18.5 1,19.5" fill="#fff" stroke="#111" stroke-width="1.1"/><polygon points="5,6.5 13,1 13,11.5 5,18.5" fill="#d8431a" stroke="#111" stroke-width="1.1"/><polygon points="1,8 9,2 13,1 5,6.5" fill="#fff" stroke="#111" stroke-width="1.1"/></svg>
<span class="t" style="left:131.0px;top:653.9px;font-size:14px;color:#111;transform:scaleX(1.0406);">Exterior Wall Exterior-140-B</span>
<svg class="b" style="left:38.2px;top:678.5px;" width="11" height="11" viewBox="0 0 11 11"><defs><linearGradient id="bx" x1="0" y1="0" x2="1" y2="1"><stop offset="0" stop-color="#fff"/><stop offset="1" stop-color="#dcdcdc"/></linearGradient></defs><rect x="0.5" y="0.5" width="10" height="10" rx="1.5" fill="url(#bx)" stroke="#9a9a9a"/><path d="M3,5.5h5" stroke="#4b63a7" stroke-width="1.2"/><path d="M5.5,3v5" stroke="#4b63a7" stroke-width="1.2"/></svg>
<svg class="b" style="left:57.5px;top:675.0px;" width="20" height="15" viewBox="0 0 20 15"><rect x="0.8" y="0.8" width="18.4" height="13.4" fill="#fff" stroke="#111" stroke-width="1.5"/><path d="M7.5,1v13M13.5,1v13" stroke="#111" stroke-width="1.5"/><rect x="8.5" y="2" width="4" height="11" fill="#cfe0e8"/><rect x="14.5" y="2" width="4" height="11" fill="#cfe0e8"/></svg>
<span class="t" style="left:83.7px;top:676.4px;font-size:14px;color:#111;transform:scaleX(1.0646);">Openings</span>
<svg class="b" style="left:38.2px;top:701.0px;" width="11" height="11" viewBox="0 0 11 11"><defs><linearGradient id="bx" x1="0" y1="0" x2="1" y2="1"><stop offset="0" stop-color="#fff"/><stop offset="1" stop-color="#dcdcdc"/></linearGradient></defs><rect x="0.5" y="0.5" width="10" height="10" rx="1.5" fill="url(#bx)" stroke="#9a9a9a"/><path d="M3,5.5h5" stroke="#4b63a7" stroke-width="1.2"/><path d="M5.5,3v5" stroke="#4b63a7" stroke-width="1.2"/></svg>
<svg class="b" style="left:57.5px;top:696.5px;" width="20" height="19" viewBox="0 0 20 19"><rect x="1" y="1" width="18" height="15" fill="#cfd8cf" stroke="#555" stroke-width="1" stroke-dasharray="1.2 1.2"/><path d="M16,17.5h-5l2.5,-2" fill="none" stroke="#333" stroke-width="1"/></svg>
<span class="t" style="left:83.7px;top:698.9px;font-size:14px;color:#bdbdbd;transform:scaleX(1.0373);">Rooms</span>
<svg class="b" style="left:14.5px;top:723.5px;" width="11" height="11" viewBox="0 0 11 11"><defs><linearGradient id="bx" x1="0" y1="0" x2="1" y2="1"><stop offset="0" stop-color="#fff"/><stop offset="1" stop-color="#dcdcdc"/></linearGradient></defs><rect x="0.5" y="0.5" width="10" height="10" rx="1.5" fill="url(#bx)" stroke="#9a9a9a"/><path d="M3,5.5h5" stroke="#4b63a7" stroke-width="1.2"/></svg>
<svg class="b" style="left:34px;top:720.0px;" width="19" height="16" viewBox="0 0 19 16"><polygon points="5,2 18,2 13,9 0.5,9" fill="none" stroke="#888" stroke-width="0.8"/><polygon points="6,6 17,6 13,11.5 2,11.5" fill="#f3e24a" stroke="#111" stroke-width="1.1"/><path d="M2,13.5h11l4,-5.5" fill="none" stroke="#999" stroke-width="0.8"/></svg>
<span class="t" style="left:60.3px;top:721.4px;font-size:14px;color:#111;transform:scaleX(1.0517);">Roof</span>
<svg class="b" style="left:38.2px;top:746.0px;" width="11" height="11" viewBox="0 0 11 11"><defs><linearGradient id="bx" x1="0" y1="0" x2="1" y2="1"><stop offset="0" stop-color="#fff"/><stop offset="1" stop-color="#dcdcdc"/></linearGradient></defs><rect x="0.5" y="0.5" width="10" height="10" rx="1.5" fill="url(#bx)" stroke="#9a9a9a"/><path d="M3,5.5h5" stroke="#4b63a7" stroke-width="1.2"/></svg>
<svg class="b" style="left:57px;top:745.5px;" width="21" height="10" viewBox="0 0 21 10"><polygon points="6,0.8 20,0.8 14,6.5 0.8,6.5" fill="#f7f2a8" stroke="#111" stroke-width="1.1"/><polygon points="0.8,6.5 14,6.5 14,9 0.8,9" fill="#c9b31c" stroke="#111" stroke-width="1"/><polygon points="14,6.5 20,0.8 20,3.2 14,9" fill="#8c7a10" stroke="#111" stroke-width="1"/></svg>
<span class="t" style="left:83.7px;top:743.9px;font-size:14px;color:#111;transform:scaleX(1.0253);">Planar Structures</span>
<div class="b" style="left:105px;top:762.5px;width:160px;height:22.5px;background:#0a2287;"></div>
<svg class="b" style="left:62.5px;top:769.5px;" width="11" height="11" viewBox="0 0 11 11"><defs><linearGradient id="bx" x1="0" y1="0" x2="1" y2="1"><stop offset="0" stop-color="#fff"/><stop offset="1" stop-color="#dcdcdc"/></linearGradient></defs><rect x="0.5" y="0.5" width="10" height="10" rx="1.5" fill="url(#bx)" stroke="#9a9a9a"/><path d="M3,5.5h5" stroke="#4b63a7" stroke-width="1.2"/><path d="M5.5,3v5" stroke="#4b63a7" stroke-width="1.2"/></svg>
<svg class="b" style="left:81px;top:768.0px;" width="21" height="10" viewBox="0 0 21 10"><polygon points="6,0.8 20,0.8 14,6.5 0.8,6.5" fill="#f7f2a8" stroke="#111" stroke-width="1.1"/><polygon points="0.8,6.5 14,6.5 14,9 0.8,9" fill="#c9b31c" stroke="#111" stroke-width="1"/><polygon points="14,6.5 20,0.8 20,3.2 14,9" fill="#8c7a10" stroke="#111" stroke-width="1"/></svg>
<span class="t" style="left:108.0px;top:766.4px;font-size:14px;color:#fff;transform:scaleX(0.9399);">Floor ROOF_C250_TILES</span>
<svg class="b" style="left:62.5px;top:792.0px;" width="11" height="11" viewBox="0 0 11 11"><defs><linearGradient id="bx" x1="0" y1="0" x2="1" y2="1"><stop offset="0" stop-color="#fff"/><stop offset="1" stop-color="#dcdcdc"/></linearGradient></defs><rect x="0.5" y="0.5" width="10" height="10" rx="1.5" fill="url(#bx)" stroke="#9a9a9a"/><path d="M3,5.5h5" stroke="#4b63a7" stroke-width="1.2"/><path d="M5.5,3v5" stroke="#4b63a7" stroke-width="1.2"/></svg>
<svg class="b" style="left:81px;top:790.5px;" width="21" height="10" viewBox="0 0 21 10"><polygon points="6,0.8 20,0.8 14,6.5 0.8,6.5" fill="#f7f2a8" stroke="#111" stroke-width="1.1"/><polygon points="0.8,6.5 14,6.5 14,9 0.8,9" fill="#c9b31c" stroke="#111" stroke-width="1"/><polygon points="14,6.5 20,0.8 20,3.2 14,9" fill="#8c7a10" stroke="#111" stroke-width="1"/></svg>
<span class="t" style="left:108.0px;top:788.9px;font-size:14px;color:#111;transform:scaleX(0.9399);">Floor ROOF_C250_TILES</span>
<div class="b" style="left:5px;top:831px;width:491px;height:144px;background:#fff;border:1px solid #6f6f6f;box-sizing:border-box;"></div>
<div class="b" style="left:5px;top:975px;width:82px;height:26px;background:#fff;"></div>
<div class="b" style="left:87px;top:977px;width:150px;height:24px;background:#f0f0f0;border-right:1px solid #dcdcdc;box-sizing:border-box;"></div>
<svg class="b" style="left:14px;top:981px;" width="20" height="18" viewBox="0 0 20 18"><rect x="0.6" y="0.6" width="18.8" height="16.8" fill="#fff" stroke="#666" stroke-width="1.2"/><rect x="1.2" y="1.2" width="17.6" height="3" fill="#9fb4d0"/><path d="M3,14 v-6 h3 l1,1.5 h5 v4.5z" fill="#f2d86a" stroke="#8a7420" stroke-width="0.8"/><circle cx="12" cy="9" r="2.6" fill="#cfe0ff" stroke="#223a8a" stroke-width="1.2"/><path d="M14,11 l3,3.5" stroke="#223a8a" stroke-width="1.8"/></svg>
<span class="t" style="left:41.2px;top:983.7px;font-size:13px;color:#111;transform:scaleX(1.0167);">Model</span>
<svg class="b" style="left:92px;top:977px;" width="21" height="21" viewBox="0 0 21 21"><polygon points="8,1 16,7 10,12 1,6" fill="#8e1010" stroke="#400" stroke-width="0.8"/><polygon points="1,6 10,12 10,20 3,14" fill="#8bd11a" stroke="#2a4a00" stroke-width="0.9"/><polygon points="10,12 16,7 20,11 17,16 10,20" fill="#c8f02a" stroke="#2a4a00" stroke-width="0.9"/></svg>
<span class="t" style="left:120.0px;top:981.9px;font-size:13px;color:#111;transform:scaleX(1.0168);">Document Browser</span>
<!-- sec_mdi -->
<div class="b" style="left:500px;top:175px;width:1420px;height:827px;background:#ababab;"></div>
<div class="b" style="left:500px;top:175px;width:1.5px;height:827px;background:#858585;"></div>
<div class="b" style="left:502px;top:980px;width:1418px;height:21px;background:linear-gradient(90deg,#a9a9a9 0px,#a9a9a9 480px,#a6a6a6 480px,#a6a6a6 494px,#a6a6a6 494px,#a6a6a6 510px,#a6a6a6 510px,#a6a6a6 516px,#a6a6a6 516px,#a6a6a6 523px,#a6a6a6 523px,#a6a6a6 528px,#a4a4a4 528px,#a4a4a4 538px,#a5a5a5 538px,#a5a5a5 555px,#a3a3a3 555px,#a3a3a3 566px,#a2a2a2 566px,#a2a2a2 583px,#a2a2a2 583px,#a2a2a2 605px,#a6a6a6 605px,#a6a6a6 616px,#a8a8a8 616px,#a8a8a8 638px,#a5a5a5 638px,#a5a5a5 660px,#a9a9a9 660px,#a9a9a9 665px,#a4a4a4 665px,#a4a4a4 670px,#a1a1a1 670px,#a1a1a1 678px,#a4a4a4 678px,#a4a4a4 686px,#a0a0a0 686px,#a0a0a0 708px,#9c9c9c 708px,#9c9c9c 717px,#a5a5a5 717px,#a5a5a5 739px,#9b9b9b 739px,#9b9b9b 754px,#a3a3a3 754px,#a3a3a3 760px,#a2a2a2 760px,#a2a2a2 770px,#a0a0a0 770px,#a0a0a0 791px,#a1a1a1 791px,#a1a1a1 805px,#9e9e9e 805px,#9e9e9e 823px,#a7a7a7 823px,#a7a7a7 834px,#969696 834px,#969696 845px,#a1a1a1 845px,#a1a1a1 858px,#a6a6a6 858px,#a6a6a6 872px,#a3a3a3 872px,#a3a3a3 885px,#959595 885px,#959595 891px,#969696 891px,#969696 908px,#959595 908px,#959595 922px,#9d9d9d 922px,#9d9d9d 941px,#a7a7a7 941px,#a7a7a7 947px,#a8a8a8 947px,#a8a8a8 969px,#999999 969px,#999999 983px,#a2a2a2 983px,#a2a2a2 998px,#a8a8a8 998px,#a8a8a8 1020px,#aaaaaa 1020px,#aaaaaa 1026px,#9e9e9e 1026px,#9e9e9e 1038px,#8f8f8f 1038px,#8f8f8f 1044px,#a4a4a4 1044px,#a4a4a4 1057px,#979797 1057px,#979797 1075px,#ababab 1075px,#ababab 1091px,#8d8d8d 1091px,#8d8d8d 1106px,#999999 1106px,#999999 1124px,#9e9e9e 1124px,#9e9e9e 1131px,#a7a7a7 1131px,#a7a7a7 1141px,#a6a6a6 1141px,#a6a6a6 1149px,#9b9b9b 1149px,#9b9b9b 1165px,#8f8f8f 1165px,#8f8f8f 1184px,#9b9b9b 1184px,#9b9b9b 1202px,#ababab 1202px,#ababab 1214px,#ababab 1214px,#ababab 1231px,#a6a6a6 1231px,#a6a6a6 1243px,#a5a5a5 1243px,#a5a5a5 1258px,#aeaeae 1258px,#aeaeae 1274px,#8f8f8f 1274px,#8f8f8f 1282px,#959595 1282px,#959595 1290px,#8d8d8d 1290px,#8d8d8d 1301px,#939393 1301px,#939393 1323px,#8d8d8d 1323px,#8d8d8d 1336px,#a0a0a0 1336px,#a0a0a0 1353px,#989898 1353px,#989898 1375px,#a5a5a5 1375px,#a5a5a5 1383px,#aeaeae 1383px,#aeaeae 1403px,#9d9d9d 1403px,#9d9d9d 1408px,#9b9b9b 1408px,#9b9b9b 1418px);"></div>
<div class="b" style="left:500px;top:1000px;width:1420px;height:2px;background:#8a8a8a;"></div>
<span class="t" style="left:506.9px;top:981.8px;font-size:13px;color:#e6e6e6;transform:scaleX(1.0247);font-family:&quot;DejaVu Sans&quot;,sans-serif;white-space:pre;">Vertex BD Pro  2024  64-bit</span>
<span class="t" style="left:1738.6px;top:982.1px;font-size:13px;color:#ececec;transform:scaleX(1.0323);font-family:&quot;DejaVu Sans&quot;,sans-serif;">30.0.9 (r194725-cf91ae9)</span>
<div class="b" style="left:537px;top:204px;width:1383px;height:778px;background:linear-gradient(#c3d4e8,#d9e6f3 8%,#d6e3f1);border:1px solid #8a8f96;border-radius:7px 7px 0 0;box-sizing:border-box;"></div>
<div class="b" style="left:1897px;top:217px;width:11px;height:22px;background:linear-gradient(#c2d2e6,#d5e2f0);border:1px solid #9fb2cf;border-left:none;border-radius:0 3px 3px 0;box-sizing:border-box;"></div>
<div class="b" style="left:548px;top:244px;width:1362px;height:727px;background:#fff;border:1px solid #7c7c7c;box-sizing:border-box;"></div>
<div class="b" style="left:727px;top:957px;width:1000px;height:9px;background:transparent;border:1px solid #1e9a1e;border-top:none;box-sizing:border-box;"></div>
<div class="b" style="left:1146px;top:956px;width:1px;height:12px;background:#2020d0;"></div>
<div class="b" style="left:1245px;top:956px;width:1px;height:12px;background:#2020d0;"></div>
<span class="t" style="left:1152.0px;top:956.9px;font-size:9px;color:#3a3ad0;transform:scaleX(1.1314);">Area of ground floor</span>
<div class="b" style="left:511px;top:179px;width:1385px;height:778px;background:linear-gradient(#9ab4d4 0px,#b4cce7 38px,#b9d1ea 60px,#b9d1ea);border:1px solid #4e5256;border-radius:8px 8px 0 0;box-sizing:border-box;box-shadow:inset 1px 1px 0 #e9f1fa, inset -1px -1px 0 #2fc4ea;"></div>
<svg class="b" style="left:525px;top:192px;" width="18" height="21" viewBox="0 0 18 21"><rect x="0.5" y="0.5" width="16.5" height="19.5" fill="#fff" stroke="#888" stroke-width="0.8"/><path d="M0.5,20.3h17V0.5" fill="none" stroke="#333" stroke-width="1.4"/><path d="M5,5 h8 v2.5 h-3 v5 h3 v2.5 h-8z" fill="#e6e61a" stroke="#55550a" stroke-width="0.9"/><rect x="7.5" y="8" width="3.5" height="3.2" fill="#222"/></svg>
<span class="t" style="left:549.0px;top:195.8px;font-size:15px;color:#101018;transform:scaleX(0.9825);">3D: IFC_Object_Model - Ground floor wall layout</span>
<div class="b" style="left:1759px;top:191px;width:40px;height:23px;background:linear-gradient(#c3d5ea 0,#bccfe6 48%,#9fb7d4 50%,#b3cae6 100%);border:1px solid #7e93b2;border-radius:3px;box-sizing:border-box;box-shadow:inset 0 0 0 1px rgba(255,255,255,0.45);"></div>
<div class="b" style="left:1801px;top:191px;width:40px;height:23px;background:linear-gradient(#c3d5ea 0,#bccfe6 48%,#9fb7d4 50%,#b3cae6 100%);border:1px solid #7e93b2;border-radius:3px;box-sizing:border-box;box-shadow:inset 0 0 0 1px rgba(255,255,255,0.45);"></div>
<div class="b" style="left:1844px;top:191px;width:40px;height:23px;background:linear-gradient(#e9a896 0,#d98571 45%,#c2432a 50%,#cf5a42 80%,#e0907c 100%);border:1px solid #6e3340;border-radius:3px;box-sizing:border-box;box-shadow:inset 0 0 0 1px rgba(255,255,255,0.45);"></div>
<svg class="b" style="left:1771px;top:203px;" width="15" height="7" viewBox="0 0 15 7"><rect x="0.8" y="0.8" width="12.4" height="4.4" rx="1" fill="#f4f4f4" stroke="#55607a" stroke-width="1.1"/></svg>
<svg class="b" style="left:1814px;top:196px;" width="14" height="12" viewBox="0 0 14 12"><rect x="0.8" y="0.8" width="11.6" height="9.6" rx="1" fill="#f4f4f4" stroke="#55607a" stroke-width="1.1"/><rect x="3.8" y="4" width="5.6" height="3.6" fill="#5f7aa8" stroke="#55607a" stroke-width="0.8"/></svg>
<svg class="b" style="left:1856px;top:196px;" width="15" height="12" viewBox="0 0 15 12"><path d="M2.5,2.5 L12,9.8 M12,2.5 L2.5,9.8" stroke="#5a3a40" stroke-width="4.8" stroke-linecap="square"/><path d="M2.5,2.5 L12,9.8 M12,2.5 L2.5,9.8" stroke="#f4f4f4" stroke-width="2.8" stroke-linecap="square"/></svg>
<div class="b" style="left:522px;top:218px;width:1364px;height:729px;background:#fff;border:1px solid #6d6d6d;border-right-color:#f4f4f4;border-bottom-color:#f4f4f4;box-sizing:border-box;"></div>
<div class="b" style="left:523px;top:219px;width:121px;height:41px;background:#fff;border-right:1px solid #cfcfcf;border-bottom:1px solid #cfcfcf;box-sizing:border-box;"></div>
<svg class="b" style="left:527px;top:227px;" width="35" height="26" viewBox="0 0 35 26"><polygon points="6,11.5 17.5,4 28.5,11.5" fill="#fbf7ec"/><rect x="6" y="11" width="22.5" height="12" fill="#fbf7ec" stroke="#a8a8a8" stroke-width="0.8"/><rect x="5" y="23" width="24.5" height="2.2" fill="#a8a8a8"/><rect x="21.6" y="1" width="2.2" height="6" fill="#b03a2a"/><path d="M1,12 L17.5,2.5 L33.5,12" fill="none" stroke="#cf4a2c" stroke-width="1.9"/><rect x="8.5" y="13.5" width="7.5" height="6.5" fill="#a9c9ee" stroke="#9aa6b8" stroke-width="0.9"/><path d="M12.2,13.5v6.5" stroke="#9aa6b8"/><rect x="19.5" y="13.5" width="7.5" height="6.5" fill="#a9c9ee" stroke="#9aa6b8" stroke-width="0.9"/><path d="M23.2,13.5v6.5" stroke="#9aa6b8"/></svg>
<svg class="b" style="left:570px;top:228px;" width="27" height="24" viewBox="0 0 27 24"><rect x="0.5" y="1" width="19" height="15" fill="#fff" stroke="#b8b8b8"/><path d="M0,1h20" stroke="#2f9c98" stroke-width="1.8"/><rect x="7" y="7.5" width="19" height="15" fill="#fff" stroke="#b8b8b8"/><path d="M6.5,7.5h20" stroke="#2f9c98" stroke-width="1.8"/></svg>
<svg class="b" style="left:609px;top:229px;" width="26" height="22" viewBox="0 0 26 22"><rect x="0.5" y="0.5" width="6" height="4.6" fill="#fff" stroke="#c6c6c6"/><rect x="9.5" y="0.5" width="6" height="4.6" fill="#fff" stroke="#c6c6c6"/><rect x="18.5" y="0.5" width="6" height="4.6" fill="#fff" stroke="#c6c6c6"/><rect x="0.5" y="8.1" width="6" height="4.6" fill="#fff" stroke="#c6c6c6"/><rect x="9.5" y="8.1" width="6" height="4.6" fill="#fff" stroke="#c6c6c6"/><rect x="18.5" y="8.1" width="6" height="4.6" fill="#fff" stroke="#c6c6c6"/><rect x="0.5" y="15.7" width="6" height="4.6" fill="#fff" stroke="#c6c6c6"/><rect x="9.5" y="15.7" width="6" height="4.6" fill="#fff" stroke="#c6c6c6"/></svg>
<div class="b" style="left:848px;top:226px;width:838px;height:37px;background:#fdfdfd;border:1px solid #f4f4f4;box-sizing:border-box;"></div>
<div class="b" style="left:966px;top:227px;width:119px;height:35px;background:#fffaf1;"></div>
<svg class="b" style="left:848px;top:226px;opacity:0.14;" width="838" height="37" viewBox="0 0 838 37"><g transform="translate(4.6,6)"><path d="M14,2 l8,8 l-4,1 l-4,4 l0,4 l-3,-3 l-7,7 l-1,-1 l7,-7 l-3,-3 l4,0 l4,-4z" fill="#777"/></g><g transform="translate(42.7,6)"><path d="M3,3h14" stroke="#2a9a2a" stroke-width="2.4"/><path d="M6,7v8q0,3 3,3h6 M4,9l2,-3l2,3 M13,15.5l3,2.5l-3,2.5" fill="none" stroke="#667" stroke-width="1.4"/><path d="M21,6v16" stroke="#2a9a2a" stroke-width="2.6"/></g><g transform="translate(86.0,6)"><rect x="-4" y="6" width="32" height="14" fill="#f3ef8a" stroke="#b8a800" stroke-width="1.2"/><path d="M0,6v5M4,6v3M8,6v5M12,6v3M16,6v5M20,6v3M24,6v5" stroke="#a89a00" stroke-width="1"/></g><g transform="translate(127.8,6)"><circle cx="8" cy="6" r="3.4" fill="none" stroke="#555" stroke-width="1.2"/><circle cx="8" cy="6" r="1.2" fill="#555"/><path d="M14,10 l0,11 l3,-3 l2,4.5 l1.6,-0.8 l-2,-4.3 l4,0z" fill="#fff" stroke="#666" stroke-width="1"/></g><g transform="translate(168.0,6)"><path d="M3,11 L12,2 l2,2 L5,13z" fill="#aaa" stroke="#666" stroke-width="0.8"/><path d="M14,10 l0,11 l3,-3 l2,4.5 l1.6,-0.8 l-2,-4.3 l4,0z" fill="#fff" stroke="#666" stroke-width="1"/></g><g transform="translate(208.0,6)"><path d="M2,8 l5,-5 h10 l-5,5z" fill="#fff" stroke="#666" stroke-width="1.1"/><path d="M14,10 l0,11 l3,-3 l2,4.5 l1.6,-0.8 l-2,-4.3 l4,0z" fill="#fff" stroke="#666" stroke-width="1"/></g><g transform="translate(246.5,6)"><path d="M2,3 h20 l-8,9 v10 l-4,-3 v-7z" fill="#f4f4f4" stroke="#777" stroke-width="1.3"/></g><g transform="translate(285.4,6)"><path d="M3,8 h14 v14 h-14z M3,8 l5,-5 h14 l-5,5 M22,3 v14 l-5,5" fill="none" stroke="#5a8a5a" stroke-width="1.3"/><rect x="3" y="8" width="14" height="14" fill="#3ac23a"/><path d="M3,8 l5,-5 h14 l-5,5z" fill="#8be08b"/></g><g transform="translate(325.7,6)"><path d="M3,8 h14 v14 h-14z M3,8 l5,-5 h14 l-5,5 M22,3 v14 l-5,5" fill="none" stroke="#888" stroke-width="1.3"/><path d="M17,8v14" stroke="#3ac23a" stroke-width="2.4"/></g><g transform="translate(366.0,6)"><path d="M3,8 h14 v14 h-14z M3,8 l5,-5 h14 l-5,5 M22,3 v14 l-5,5" fill="none" stroke="#888" stroke-width="1.3"/><path d="M3,8v14" stroke="#3ac23a" stroke-width="2.4"/></g><g transform="translate(405.4,6)"><path d="M3,8 h14 v14 h-14z M3,8 l5,-5 h14 l-5,5 M22,3 v14 l-5,5" fill="none" stroke="#888" stroke-width="1.3"/><path d="M22,3v14" stroke="#3ac23a" stroke-width="2.4"/></g><g transform="translate(445.7,6)"><path d="M12,2 l10,5 v11 l-10,5 l-10,-5 v-11z M2,7 l10,5 l10,-5 M12,12 v11" fill="#fafafa" stroke="#9a9a9a" stroke-width="1.2"/></g><g transform="translate(486.0,6)"><path d="M3,8 h14 v14 h-14z M3,8 l5,-5 h14 l-5,5 M22,3 v14 l-5,5" fill="none" stroke="#5a8a5a" stroke-width="1.3"/><rect x="3" y="8" width="14" height="14" fill="#3ac23a"/><path d="M11,9 l0,11 l3,-3 l2,4.5 l1.6,-0.8 l-2,-4.3 l4,0z" fill="#fff" stroke="#444" stroke-width="1"/></g><g transform="translate(526.3,6)"><path d="M7,0h8l-4,4z" fill="#888"/><rect x="2" y="5" width="20" height="18" fill="#fafafa" stroke="#999" stroke-width="1"/><path d="M4,8h16M4,11h16M4,14h16M4,17h16M4,20h16" stroke="#aaa" stroke-width="1"/></g><g transform="translate(566.6,6)"><path d="M3,3 h9 v10 h10 v9 h-19z" fill="#c3d8ee" stroke="#5a82b4" stroke-width="1.4"/><path d="M3,17h19" stroke="#5a82b4" stroke-width="1"/></g><g transform="translate(605.6,6)"><path d="M3,9 l4,-5 h14 l-4,5z M3,9 v6 M17,9 v6 M21,4 v6" fill="#f6f6f6" stroke="#999" stroke-width="1.1"/><path d="M2,15 h16 l4,-5 v7 l-4,5 h-16z" fill="#f2dc4a" stroke="#a89a20" stroke-width="1"/></g><g transform="translate(646.0,6)"><path d="M5,2 l14,11 M19,2 l-14,11" stroke="#888" stroke-width="2.2"/><path d="M3,17 l4,-4 h12 l4,4 v5 h-20z" fill="#fafafa" stroke="#999" stroke-width="1.1"/></g><g transform="translate(687.5,6)"><path d="M9,17 V3 M9,3 l-2.5,4 M9,3 l2.5,4" fill="none" stroke="#2ab02a" stroke-width="1.5"/><path d="M9,17 H23 M23,17 l-4,-2.5 M23,17 l-4,2.5" fill="none" stroke="#e03030" stroke-width="1.5"/><path d="M9,17 L2,23 M2,23 l1,-4 M2,23 l4,-0.5" fill="none" stroke="#3030e0" stroke-width="1.5"/></g><g transform="translate(725.6,6)"><path d="M2,8 l5,-4 v16 l-5,4z M9,8 l3,-2.5 v16 l-3,2.5z" fill="#fafafa" stroke="#999" stroke-width="1.1"/><path d="M16,7 l6,-5 v16 l-6,5z" fill="#4a55c8"/></g><g transform="translate(766.0,6)"><path d="M8,1 h9 v7 h7 v9 h-7 v7 h-9 v-7 h-7 v-9 h7z" fill="#8a8a8a"/></g><g transform="translate(806.0,6)"><rect x="1" y="9" width="16" height="14" fill="#eaf3fc" stroke="#4a8ad0" stroke-width="1.4"/><path d="M10,15 L23,2 M23,2 h-7 M23,2 v7" fill="none" stroke="#4a8ad0" stroke-width="1.8"/></g></svg>
<!-- sec_scene -->
<svg class="b" style="left:523px;top:219px;overflow:hidden;" width="1362" height="727" viewBox="523 219 1362 727"><defs><pattern id="tile" width="6" height="4" patternUnits="userSpaceOnUse" patternTransform="rotate(22)"><rect width="6" height="4" fill="#4e1307"/><path d="M0,0.5h6" stroke="#471005" stroke-width="0.7"/><path d="M0,2.5h6" stroke="#541609" stroke-width="0.5"/><path d="M1.5,0v2M4.5,2v2" stroke="#430f05" stroke-width="0.5"/></pattern><filter id="bl" x="-10%" y="-10%" width="120%" height="120%"><feGaussianBlur stdDeviation="0.8"/></filter><linearGradient id="brn" x1="0" y1="0" x2="1" y2="0.4"><stop offset="0" stop-color="#615543"/><stop offset="0.5" stop-color="#5b4f3d"/><stop offset="1" stop-color="#5d513f"/></linearGradient><linearGradient id="lgw" gradientUnits="userSpaceOnUse" x1="745" y1="395.7" x2="761.25" y2="419.5"><stop offset="0" stop-color="#9ccccc"/><stop offset="0.72" stop-color="#97caca"/><stop offset="1" stop-color="#37bdbd"/></linearGradient><linearGradient id="lbb" gradientUnits="userSpaceOnUse" x1="785" y1="0" x2="900" y2="0"><stop offset="0" stop-color="#3c86a4"/><stop offset="0.7" stop-color="#3a8ca8"/><stop offset="1" stop-color="#37bdbd"/></linearGradient><clipPath id="cy"><polygon points="877.7,305 1461,542 1189,726 607,490"/></clipPath></defs><polygon points="657.0,400.0 1148.5,259.0 1148.5,345.0 657.0,485.0" fill="#cdcdcd"/><polygon points="1148.5,259.0 1693.0,479.0 1693.0,570.0 1148.5,345.0" fill="#606060"/><polyline points="1147.0,268.5 1147.0,339.0" fill="none" stroke="#3a3a3a" stroke-width="1"/><polygon points="657.0,400.0 1148.5,259.0 1147.0,268.5 686.0,401.7" fill="#41608a"/><polygon points="657.0,400.0 1148.5,259.0 1148.0,261.9 665.7,400.5" fill="#a99a6e"/><polyline points="665.7,400.5 1148.0,261.9" fill="none" stroke="#10161e" stroke-width="1.1"/><polyline points="686.0,401.7 1147.0,268.5" fill="none" stroke="#121a24" stroke-width="1.2"/><polyline points="657.0,400.0 1148.5,259.0" fill="none" stroke="#15120c" stroke-width="1.2"/><polygon points="1148.5,259.0 1693.0,479.0 1666.5,477.6 1147.0,268.5" fill="#41608a"/><polygon points="1148.5,259.0 1693.0,479.0 1685.0,478.6 1148.0,261.9" fill="#a99a6e"/><polyline points="1148.0,261.9 1685.0,478.6" fill="none" stroke="#10161e" stroke-width="1.1"/><polyline points="1147.0,268.5 1666.5,477.6" fill="none" stroke="#121a24" stroke-width="1.2"/><polyline points="1148.5,259.0 1693.0,479.0" fill="none" stroke="#15120c" stroke-width="1.2"/><polygon points="1693.0,479.0 1480.0,539.7 1470.0,533.6 1666.5,477.6" fill="#41608a"/><polygon points="1693.0,479.0 1480.0,539.7 1477.0,537.9 1685.0,478.6" fill="#a99a6e"/><polyline points="1685.0,478.6 1477.0,537.9" fill="none" stroke="#10161e" stroke-width="1.1"/><polyline points="1666.5,477.6 1470.0,533.6" fill="none" stroke="#121a24" stroke-width="1.2"/><polyline points="1693.0,479.0 1480.0,539.7" fill="none" stroke="#15120c" stroke-width="1.2"/><polygon points="657.0,400.0 1202.0,618.0 1205.5,610.8 686.0,401.7" fill="#41608a"/><polygon points="657.0,400.0 1202.0,618.0 1203.0,615.8 665.7,400.5" fill="#a99a6e"/><polyline points="665.7,400.5 1203.0,615.8" fill="none" stroke="#10161e" stroke-width="1.1"/><polyline points="686.0,401.7 1205.5,610.8" fill="none" stroke="#121a24" stroke-width="1.2"/><polyline points="657.0,400.0 1202.0,618.0" fill="none" stroke="#15120c" stroke-width="1.2"/><polyline points="1148.5,259.0 1147.0,268.5" fill="none" stroke="#20303f" stroke-width="0.8"/><polyline points="1693.0,479.0 1666.5,477.6" fill="none" stroke="#20303f" stroke-width="0.8"/><polyline points="657.0,400.0 686.0,401.7" fill="none" stroke="#20303f" stroke-width="0.8"/><polygon points="1202.0,618.0 1693.0,479.0 1693.0,742.0 1201.0,883.0" fill="#c9b68e"/><polygon points="1201.0,883.0 1693.0,742.0 1693.0,753.0 1201.0,893.5" fill="#c4b189"/><polyline points="1201.0,883.0 1693.0,742.0" fill="none" stroke="#3a3222" stroke-width="1"/><polygon points="1201.0,893.5 1693.0,753.0 1693.0,760.0 1201.0,900.0" fill="#8f8f8f"/><polyline points="1201.0,893.5 1693.0,753.0" fill="none" stroke="#2a2a2a" stroke-width="1"/><polyline points="1693.0,479.0 1693.0,760.0" fill="none" stroke="#1a1a1a" stroke-width="1.2"/><polyline points="1201.0,900.0 1693.0,760.0" fill="none" stroke="#1a1a1a" stroke-width="1"/><polygon points="1418.0,588.0 1448.8,574.3 1466.0,559.0 1693.0,584.2 1693.0,596.5 1510.0,578.0" fill="#ae9e7c"/><polygon points="1418.0,588.0 1448.8,574.3 1510.0,578.0 1693.0,596.5 1693.0,600.0 1510.0,581.5 1450.0,578.0 1418.0,592.0" fill="#bdac87"/><polygon points="1574.4,613.6 1637.0,595.9 1637.0,687.5 1574.4,705.7" fill="#a59266" stroke="#1a1a1a" stroke-width="1" stroke-linejoin="round"/><polygon points="1574.4,613.6 1625.0,599.3 1625.0,683.3 1574.4,697.0" fill="#5b5b5b"/><polygon points="1625.0,599.3 1633.5,597.0 1633.5,684.8 1625.0,683.3" fill="#25354d"/><polygon points="1574.4,697.0 1625.0,683.3 1633.5,684.8 1574.4,702.2" fill="#3f5f8e"/><polyline points="1625.0,599.3 1625.0,683.3 1574.4,697.0" fill="none" stroke="#161616" stroke-width="0.9"/><polyline points="1633.5,597.0 1633.5,684.8 1574.4,702.2" fill="none" stroke="#161616" stroke-width="0.9"/><polygon points="1378.0,835.5 1574.0,779.0 1651.0,810.4 1455.5,868.7" fill="#777777" stroke="#1a1a1a" stroke-width="1" stroke-linejoin="round"/><polygon points="1378.0,835.5 1455.5,868.7 1455.5,882.0 1378.0,848.0" fill="#484848" stroke="#1a1a1a" stroke-width="1" stroke-linejoin="round"/><polygon points="1455.5,868.7 1651.0,810.4 1651.0,823.0 1455.5,882.0" fill="#8a8a8a" stroke="#1a1a1a" stroke-width="1" stroke-linejoin="round"/><polygon points="1469.0,667.0 1498.0,660.0 1498.0,798.0 1469.0,804.0" fill="#d2b26e"/><polygon points="1479.7,665.0 1483.6,664.0 1483.6,801.0 1479.7,802.0" fill="#b3975a"/><polygon points="1483.6,664.0 1492.6,662.0 1492.6,799.0 1483.6,801.0" fill="#6a5933"/><polygon points="1493.6,661.5 1496.8,661.0 1496.8,798.2 1493.6,798.8" fill="#c9a963"/><polyline points="1492.9,662.0 1492.9,799.0" fill="none" stroke="#1c160a" stroke-width="1.3"/><polyline points="1497.5,660.0 1497.5,798.0" fill="none" stroke="#2a2212" stroke-width="1.1"/><polyline points="1479.7,665.0 1479.7,802.0" fill="none" stroke="#5f4e28" stroke-width="0.9"/><polyline points="1471.5,680.0 1477.5,678.6 1477.5,733.0 1471.5,734.4" fill="none" stroke="#4a3c1c" stroke-width="1.1"/><polyline points="1471.5,748.0 1477.5,746.6 1477.5,786.0 1471.5,787.4" fill="none" stroke="#4a3c1c" stroke-width="1.1"/><polyline points="1470.0,673.0 1478.0,671.0" fill="none" stroke="#8a733c" stroke-width="1.2"/><polygon points="1469.0,798.0 1483.0,795.0 1483.0,801.0 1469.0,804.0" fill="#e3d7b0"/><polyline points="1469.0,804.5 1498.0,798.5" fill="none" stroke="#2a2a2a" stroke-width="1.4"/><polyline points="1498.0,798.0 1574.0,777.0" fill="none" stroke="#3a3222" stroke-width="1.3" stroke-dasharray="2 1.4"/><ellipse cx="1479.3" cy="727" rx="2.6" ry="2" fill="#0c0c0c"/><polygon points="1497.0,662.6 1530.0,652.0 1533.3,676.5 1499.0,687.0" fill="#ad9b78" filter="url(#bl)"/><polygon points="1405.5,647.0 1459.7,669.5 1459.7,848.0 1405.5,827.0" fill="#666666" stroke="#1a1a1a" stroke-width="1" stroke-linejoin="round"/><polygon points="1459.7,669.5 1469.5,666.7 1469.5,845.0 1459.7,848.0" fill="#d6d6d6" stroke="#1a1a1a" stroke-width="1" stroke-linejoin="round"/><polygon points="1405.5,637.7 1515.0,606.5 1569.5,629.5 1459.7,659.4" fill="#b5b5b5" stroke="#1a1a1a" stroke-width="1" stroke-linejoin="round"/><polygon points="1405.5,637.7 1459.7,659.4 1459.7,669.8 1405.5,648.0" fill="#9a9a9a" stroke="#1a1a1a" stroke-width="1" stroke-linejoin="round"/><polygon points="1459.7,659.4 1569.5,629.5 1569.5,638.7 1459.7,669.8" fill="#d2d2d2" stroke="#1a1a1a" stroke-width="1" stroke-linejoin="round"/><polygon points="657.0,400.0 1202.0,618.0 1201.0,883.0 657.0,662.5" fill="url(#brn)"/><polygon points="657.0,662.5 1201.0,883.0 1201.0,893.5 657.0,672.8" fill="#5f5341"/><polyline points="657.0,662.5 1201.0,883.0" fill="none" stroke="#15120c" stroke-width="1.1"/><polygon points="657.0,672.8 1201.0,893.5 1201.0,900.0 657.0,679.0" fill="#3c3c3c"/><polyline points="657.0,400.0 657.0,679.0" fill="none" stroke="#15120c" stroke-width="1.2"/><polyline points="657.0,679.0 1201.0,900.0" fill="none" stroke="#15120c" stroke-width="1"/><polyline points="1201.0,760.0 1201.0,900.0" fill="none" stroke="#1a1a1a" stroke-width="1.2"/><polygon points="870.4,636.3 924.3,657.7 924.3,699.3 870.4,677.9" fill="#a49468" stroke="#15120c" stroke-width="1" stroke-linejoin="round"/><polygon points="874.5,641.5 921.5,660.3 921.5,692.0 874.5,673.5" fill="#8a7c56"/><polygon points="883.5,646.4 921.2,661.3 921.2,687.5 883.5,672.8" fill="#777777" stroke="#15120c" stroke-width="0.9" stroke-linejoin="round"/><polyline points="880.0,644.5 880.0,671.5" fill="none" stroke="#2d4468" stroke-width="2.2"/><polyline points="874.5,673.5 921.5,692.0" fill="none" stroke="#2a2418" stroke-width="1.5"/><polygon points="884.0,299.7 958.7,314.6 972.6,319.3 1146.4,338.5 1562.0,507.4 1489.0,531.4 1498.0,534.6 1693.0,553.7 1693.0,550.2 1738.0,568.5 1737.0,570.0 1461.0,542.0 877.7,305.0" fill="url(#tile)"/><polyline points="884.0,299.7 958.7,314.6" fill="none" stroke="#1a0a06" stroke-width="1"/><polyline points="1693.0,550.2 1738.0,568.5" fill="none" stroke="#1a0a06" stroke-width="1"/><polyline points="972.6,319.3 1146.4,338.5 1562.0,507.4" fill="none" stroke="#2a0e08" stroke-width="0.8"/><polyline points="1489.0,531.4 1498.0,534.6 1693.0,553.7" fill="none" stroke="#2a0e08" stroke-width="0.8"/><polygon points="877.7,305.0 880.2,300.6 1462.5,538.3 1461.0,542.0" fill="#1e0a05"/><polygon points="1461.0,542.0 1737.0,570.0 1738.0,568.5 1700.0,563.0 1463.0,538.0" fill="#2a0c05"/><polygon points="1465.0,543.5 1737.0,570.5 1732.0,588.6 1465.0,558.6" fill="#d3d3d3" stroke="#1a1a1a" stroke-width="1" stroke-linejoin="round"/><polygon points="1737.0,570.5 1738.5,568.5 1733.0,587.0 1732.0,588.6" fill="#888"/><g clip-path="url(#cy)"><polygon points="877.7,305.0 1461.0,542.0 1189.0,726.0 607.0,490.0" fill="#37bdbd"/><polygon points="912.0,330.0 1300.0,470.0 1461.0,542.0 1300.0,660.0 1168.0,598.0 912.0,494.0" fill="#2aacac"/><polygon points="948.0,506.6 1008.7,470.4 1003.0,472.5 1003.0,530.0" fill="#34b8b8"/><polygon points="1008.7,470.4 1084.4,416.0 1117.5,430.0 1117.5,513.0" fill="#31b5b5"/><polygon points="1102.6,570.6 1155.9,536.5 1168.0,541.0 1168.0,598.0" fill="#31b5b5"/><polyline points="948.0,506.6 1084.4,416.0" fill="none" stroke="#44c0c0" stroke-width="1.2"/><polyline points="1003.0,472.5 1168.0,541.0" fill="none" stroke="#44c0c0" stroke-width="1.2"/><polyline points="1102.6,570.6 1155.9,536.5" fill="none" stroke="#44c0c0" stroke-width="1.2"/><polyline points="1003.0,472.5 1003.0,530.0" fill="none" stroke="#2fb2b2" stroke-width="1"/><polygon points="607.0,490.0 877.7,305.0 924.0,323.9 657.0,400.0 657.0,510.3" fill="#40c5c5"/><polygon points="773.0,376.5 861.1,351.2 750.0,427.2 717.8,414.3" fill="url(#lgw)"/><polygon points="785.5,363.1 900.0,330.3 894.0,341.6 773.0,376.6" fill="url(#lbb)"/><polyline points="786.5,364.4 880.0,337.6" fill="none" stroke="#9dbd9a" stroke-width="1.6" opacity="0.8"/><polygon points="657.0,400.0 1202.0,618.0 1202.0,731.3 657.0,510.3" fill="#4d7565"/><polygon points="657.0,479.3 1230.0,711.6 1230.0,742.6 657.0,510.3" fill="#2aadab"/><polygon points="657.0,400.0 1202.0,618.0 1205.5,610.8 686.0,401.7" fill="#2d7f9b"/><polyline points="658.5,398.2 1203.5,616.2" fill="none" stroke="#a6c19b" stroke-width="1.5"/><polyline points="657.0,400.0 1202.0,618.0" fill="none" stroke="#1d4f4a" stroke-width="1"/><polyline points="659.5,396.8 1204.5,614.8" fill="none" stroke="#1f5f68" stroke-width="0.8"/><polyline points="686.0,401.7 1205.5,610.8" fill="none" stroke="#23707f" stroke-width="0.9"/><polyline points="657.0,400.0 657.0,510.3" fill="none" stroke="#2a6f66" stroke-width="1"/><polygon points="877.7,305.0 1461.0,542.0 1466.0,558.5 882.7,321.5" fill="#33b8b8"/><polyline points="612.0,506.5 882.7,321.5 1466.0,558.5" fill="none" stroke="#168080" stroke-width="1.5"/><polyline points="877.7,305.0 882.7,321.5" fill="none" stroke="#178484" stroke-width="1.1"/></g><polygon points="607.0,490.0 657.0,510.3 657.0,524.8 612.0,506.5" fill="#879f9d"/><polygon points="657.0,510.3 1189.0,726.0 1194.0,742.5 657.0,524.8" fill="#34463d"/><polyline points="612.0,506.5 1194.0,742.5" fill="none" stroke="#1a7b7b" stroke-width="1"/><polyline points="607.0,490.0 612.0,506.5" fill="none" stroke="#168585" stroke-width="1.2"/><polyline points="612.0,506.5 624.0,498.0" fill="none" stroke="#168585" stroke-width="1"/><polygon points="1461.0,542.0 1466.0,558.5 1194.0,742.5 1189.0,726.0" fill="#7cc6b4"/><polygon points="1461.0,542.0 1466.0,558.5 1452.0,567.5 1440.0,556.0" fill="#5fb3a6"/><polyline points="1466.0,558.5 1194.0,742.5" fill="none" stroke="#168585" stroke-width="1.1"/><polyline points="1461.0,542.0 1466.0,558.5" fill="none" stroke="#3a9a96" stroke-width="1"/><polyline points="607.0,490.0 877.7,305.0" fill="none" stroke="#147979" stroke-width="2.2"/><polyline points="877.7,305.0 1461.0,542.0" fill="none" stroke="#147979" stroke-width="1.5"/><polyline points="1461.0,542.0 1189.0,726.0" fill="none" stroke="#147979" stroke-width="2.2"/><polyline points="607.0,490.0 1189.0,726.0" fill="none" stroke="#0f6a6a" stroke-width="2.1"/><circle cx="877.7" cy="305" r="5.6" fill="#fff" stroke="#333" stroke-width="0.9" stroke-dasharray="1.5 1"/><polygon points="877.7,300.4 882.3000000000001,305 877.7,309.6 873.1,305" fill="#0000c8"/><circle cx="607" cy="490" r="5.6" fill="#fff" stroke="#333" stroke-width="0.9" stroke-dasharray="1.5 1"/><polygon points="607,485.4 611.6,490 607,494.6 602.4,490" fill="#0000c8"/><circle cx="1461" cy="542" r="5.6" fill="#fff" stroke="#333" stroke-width="0.9" stroke-dasharray="1.5 1"/><polygon points="1461,537.4 1465.6,542 1461,546.6 1456.4,542" fill="#0000c8"/><rect x="736.9" y="391.9" width="11" height="11" fill="#fff" stroke="#222" stroke-width="0.8"/><rect x="738.6999999999999" y="393.7" width="7.4" height="7.4" fill="#0000c8"/><rect x="1030.5" y="517.5" width="11" height="11" fill="#fff" stroke="#222" stroke-width="0.8"/><rect x="1032.3" y="519.3" width="7.4" height="7.4" fill="#0000c8"/><rect x="892.5" y="602.5" width="11" height="11" fill="#fff" stroke="#222" stroke-width="0.8"/><rect x="894.3" y="604.3" width="7.4" height="7.4" fill="#0000c8"/><rect x="1163.3" y="417.9" width="11" height="11" fill="#fff" stroke="#222" stroke-width="0.8"/><rect x="1165.1" y="419.7" width="7.4" height="7.4" fill="#00b400"/><path d="M1088.5,410.5 H1121.5 V400.5 L1152.5,420 L1121.5,440.5 V430 H1088.5 Z" fill="none" stroke="#ed1c24" stroke-width="4" stroke-linejoin="miter"/></svg>
<!-- sec_menu -->
<div class="b" style="left:1169px;top:428px;width:249px;height:365px;background:#f0f0f0;border:1px solid #b4b4b4;box-sizing:border-box;box-shadow:3px 3px 4px rgba(0,0,0,0.45);"></div>
<div class="b" style="left:1173px;top:461px;width:240px;height:1px;background:#a6a6a6;"></div>
<div class="b" style="left:1173px;top:462px;width:240px;height:1px;background:#fafafa;"></div>
<div class="b" style="left:1173px;top:622.5px;width:240px;height:1px;background:#a6a6a6;"></div>
<div class="b" style="left:1173px;top:623.5px;width:240px;height:1px;background:#fafafa;"></div>
<div class="b" style="left:1173px;top:733px;width:240px;height:1px;background:#a6a6a6;"></div>
<div class="b" style="left:1173px;top:734px;width:240px;height:1px;background:#fafafa;"></div>
<span class="t" style="left:1202.3px;top:436.8px;font-size:14px;color:#0c0c1c;font-weight:bold;transform:scaleX(1.0433);">Move Edge</span>
<span class="t" style="left:1376.8px;top:436.8px;font-size:14px;color:#0c0c1c;font-weight:bold;transform:scaleX(1.0020);">click</span>
<span class="t" style="left:1202.3px;top:472.9px;font-size:14px;color:#1b1b2a;transform:scaleX(1.0822);">Add Point</span>
<span class="t" style="left:1202.3px;top:498.0px;font-size:14px;color:#1b1b2a;transform:scaleX(1.0101);">Trim Edge</span>
<span class="t" style="left:1202.3px;top:523.1px;font-size:14px;color:#1b1b2a;transform:scaleX(0.9935);">Edit Edge Shape</span>
<span class="t" style="left:1202.3px;top:548.1px;font-size:14px;color:#1b1b2a;transform:scaleX(1.0075);">Change Edge Radius</span>
<span class="t" style="left:1202.3px;top:573.2px;font-size:14px;color:#1b1b2a;transform:scaleX(1.0006);">Delete Edge</span>
<span class="t" style="left:1202.3px;top:598.3px;font-size:14px;color:#1b1b2a;transform:scaleX(1.0100);">Edit Edge Detail</span>
<span class="t" style="left:1202.3px;top:634.1px;font-size:14px;color:#1b1b2a;transform:scaleX(1.0681);">Connect to Another Edge</span>
<span class="t" style="left:1202.3px;top:659.3px;font-size:14px;color:#1b1b2a;transform:scaleX(1.0681);">Connect to Another Edge</span>
<span class="t" style="left:1202.3px;top:684.2px;font-size:14px;color:#1b1b2a;transform:scaleX(1.0572);">Connect to Front Plane</span>
<span class="t" style="left:1202.3px;top:709.3px;font-size:14px;color:#1b1b2a;transform:scaleX(1.0413);">Connect to Back Plane</span>
<span class="t" style="left:1202.3px;top:745.1px;font-size:14px;color:#1b1b2a;transform:scaleX(1.0593);">Flip Corner Connection</span>
<span class="t" style="left:1202.3px;top:770.3px;font-size:14px;color:#1b1b2a;transform:scaleX(1.0207);">Copy Edge</span>
<svg class="b" style="left:1174px;top:434px;" width="21" height="20" viewBox="0 0 21 20"><path d="M7,1.5H1V18.5H7M14,1.5H20V18.5H14" fill="#dedede" stroke="#222" stroke-width="1.2"/><rect x="1.6" y="2.1" width="17.8" height="15.8" fill="#dedede"/><path d="M7,1.5H1V18.5H7M14,1.5H20V18.5H14" fill="none" stroke="#222" stroke-width="1.2"/><path d="M10.5,2v16" stroke="#222" stroke-width="1"/><circle cx="10.5" cy="1.8" r="1.6" fill="#fff" stroke="#e01010" stroke-width="1"/><circle cx="10.5" cy="18.2" r="1.6" fill="#fff" stroke="#e01010" stroke-width="1"/><polygon points="8,8.6 12.5,8.6 12.5,6.3 17,10 12.5,13.7 12.5,11.4 8,11.4" fill="#18d0e0" stroke="#0a6a80" stroke-width="0.7"/></svg>
<svg class="b" style="left:1175px;top:471px;" width="19" height="18" viewBox="0 0 19 18"><path d="M6,4.5H1V17H18V4.5H13" fill="#dedede" stroke="#222" stroke-width="1.2"/><path d="M9.5,0.5v6" stroke="#e01010" stroke-width="1"/><polygon points="4.5,3.5 8,1.2 8,5.8" fill="#e01010"/><polygon points="14.5,3.5 11,1.2 11,5.8" fill="#e01010"/></svg>
<svg class="b" style="left:1174px;top:495px;" width="21" height="21" viewBox="0 0 21 21"><rect x="0.8" y="2" width="9" height="6.5" fill="#e8e8e8" stroke="#222" stroke-width="1.2"/><path d="M14,19.5 L19.5,0.5" stroke="#222" stroke-width="3.4"/><path d="M14.4,18.5 L19,1.5" stroke="#f0e000" stroke-width="1.6"/><path d="M5,9v5" stroke="#222" stroke-width="1"/><polygon points="3,13 7.5,13 7.5,10.8 11.5,14.5 7.5,18.2 7.5,16 3,16" fill="#18d0e0" stroke="#0a6a80" stroke-width="0.7"/></svg>
<svg class="b" style="left:1174px;top:520px;" width="21" height="20" viewBox="0 0 21 20"><polygon points="1,13 20,2 20,9 4.5,18 1,18" fill="#f4f0c8" stroke="#222" stroke-width="1"/><path d="M1,13.5V18.5H4.5" fill="none" stroke="#111" stroke-width="2"/></svg>
<svg class="b" style="left:1174px;top:545px;" width="21" height="20" viewBox="0 0 21 20"><path d="M1,19V10 A9.5,9 0 0 1 20,10 V19Z" fill="#8c8c8c" stroke="#222" stroke-width="1.2"/><path d="M2.5,7.5 A9.5,8 0 0 1 18.5,7.5" fill="none" stroke="#f0e000" stroke-width="1.8"/></svg>
<svg class="b" style="left:1175px;top:573px;" width="20" height="14" viewBox="0 0 20 14"><path d="M12,1H1V13H12" fill="#e8e8e8" stroke="#222" stroke-width="1.2"/><path d="M10.5,4l6,6M16.5,4l-6,6" stroke="#e01010" stroke-width="2"/></svg>
<svg class="b" style="left:1174px;top:595px;" width="21" height="20" viewBox="0 0 21 20"><text x="7" y="6.5" font-size="7" font-weight="bold" fill="#111" font-family="Liberation Sans, sans-serif">DET</text><path d="M15,10.5H1V19.5H13" fill="#e8e8e8" stroke="#222" stroke-width="1.2"/><path d="M13,16 L20,9" stroke="#222" stroke-width="1"/><circle cx="13.5" cy="15.5" r="2.2" fill="#e01010" stroke="#600" stroke-width="0.6"/></svg>
<svg class="b" style="left:1173px;top:633px;" width="22" height="16" viewBox="0 0 22 16"><path d="M1,5.5 H9 M9,5.5 L12,1.5 L20,7 M10,4.5 L9,10 M1,14 L9,10 L20,4.5" fill="none" stroke="#222" stroke-width="1.1"/></svg>
<svg class="b" style="left:1173px;top:659px;" width="22" height="16" viewBox="0 0 22 16"><path d="M1,7 L11,1.5 L21,7 M1,14.5 L11,8 L21,11 M6,4.5 L16,9.5" fill="none" stroke="#222" stroke-width="1.1"/></svg>
<svg class="b" style="left:1173px;top:682px;" width="22" height="19" viewBox="0 0 22 19"><path d="M1,6.5H10 M1,13.5H8 M8,18 L14,1 M14,18 L20,1" fill="none" stroke="#222" stroke-width="1.2"/></svg>
<svg class="b" style="left:1173px;top:707px;" width="22" height="19" viewBox="0 0 22 19"><path d="M1,7H17 M1,13H15 M8,18 L14,1 M14,18 L20,1" fill="none" stroke="#222" stroke-width="1.2"/></svg>
<svg class="b" style="left:1174px;top:742px;" width="21" height="21" viewBox="0 0 21 21"><path d="M1,2.8H18.5V11" fill="none" stroke="#222" stroke-width="4.6"/><path d="M1.5,2.8H18.5V10.5" fill="none" stroke="#ffff00" stroke-width="2.6"/><text x="0.5" y="20.3" font-size="8.6" font-weight="bold" fill="#111" font-family="Liberation Sans, sans-serif" textLength="19.5" lengthAdjust="spacingAndGlyphs">FLIP</text></svg>
<svg class="b" style="left:1174px;top:768px;" width="21" height="21" viewBox="0 0 21 21"><path d="M1,2.8H18.5V9" fill="none" stroke="#222" stroke-width="4.6"/><path d="M1.5,2.8H18.5V8.5" fill="none" stroke="#ffff00" stroke-width="2.6"/><path d="M1,10.5H11V19.5" fill="none" stroke="#222" stroke-width="4.6"/><path d="M1.5,10.5H11V19" fill="none" stroke="#ffff00" stroke-width="2.6"/></svg>
<svg class="b" style="left:1150px;top:605px;" width="290" height="70" viewBox="0 0 290 70"><path d="M30,13 C60,10.5 160,10 245,11.5 C262,12 274,17 275,28 C276,42 268,50 250,51 C180,53.5 80,54 35,52 C18,51 9.5,45 10,32 C10.5,20 16,14.5 34,12.5" fill="none" stroke="#ed1c24" stroke-width="4.2" stroke-linecap="round"/></svg>
<!-- sec_status -->
<div class="b" style="left:0px;top:1002px;width:1920px;height:28px;background:#f0f0f0;"></div>
<div class="b" style="left:0px;top:1030px;width:1920px;height:2px;background:#5a5a5a;"></div>
<div class="b" style="left:0px;top:1031px;width:1920px;height:1px;background:#cfcfcf;"></div>
<span class="t" style="left:6.8px;top:1010.7px;font-size:13px;color:#111;transform:scaleX(1.0071);">Select element</span>
<div class="b" style="left:902px;top:1004px;width:1px;height:24px;background:#d7d7d7;"></div>
<div class="b" style="left:1644px;top:1004px;width:1px;height:24px;background:#d7d7d7;"></div>
<div class="b" style="left:1743px;top:1004px;width:1px;height:24px;background:#d7d7d7;"></div>
<div class="b" style="left:1831px;top:1004px;width:1px;height:24px;background:#d7d7d7;"></div>
<span class="t" style="left:913.0px;top:1009.8px;font-size:13px;color:#111;transform:scaleX(1.0656);">Vertex Sync: Offline</span>
<span class="t" style="left:1662.4px;top:1009.8px;font-size:13px;color:#111;transform:scaleX(1.0479);">dx 216</span>
<span class="t" style="left:1750.2px;top:1009.8px;font-size:13px;color:#111;transform:scaleX(1.0376);">dy 649</span>
<span class="t" style="left:1837.6px;top:1009.8px;font-size:13px;color:#111;transform:scaleX(1.0479);">dz 692</span>
</body></html>
